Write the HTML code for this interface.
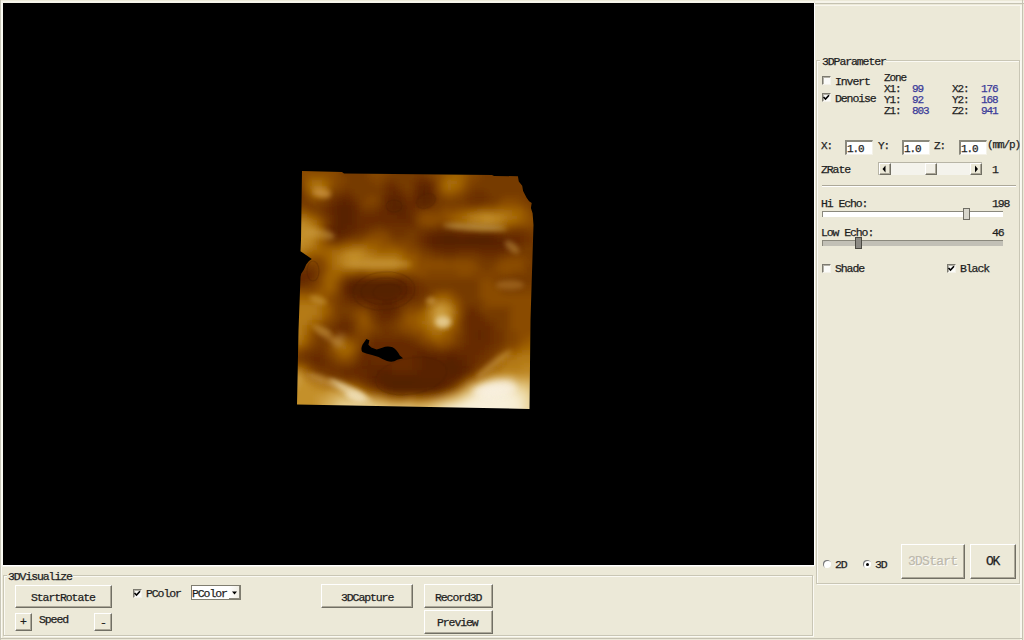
<!DOCTYPE html>
<html><head><meta charset="utf-8">
<style>
html,body{margin:0;padding:0;}
body{width:1024px;height:640px;overflow:hidden;background:#ECE9D8;position:relative;font-family:"Liberation Mono",monospace;color:#222;}
.a{position:absolute;}
.t{position:absolute;font-size:11.5px;line-height:12px;letter-spacing:-1.1px;white-space:pre;color:#1e1e1e;-webkit-text-stroke:0.25px #1e1e1e;}
.s{position:absolute;font-size:11px;line-height:11px;letter-spacing:-1.1px;white-space:pre;color:#1e1e1e;-webkit-text-stroke:0.25px #1e1e1e;}
.grp{position:absolute;border:1px solid #C9C6B5;box-shadow:1px 1px 0 #fbfaf4, inset 1px 1px 0 #fbfaf4;}
.btn{position:absolute;background:#ECE9D8;box-sizing:border-box;border-top:1px solid #fff;border-left:1px solid #fff;border-right:1px solid #716F64;border-bottom:1px solid #716F64;box-shadow:inset -1px -1px 0 #ACA899;}
.cb{position:absolute;width:9px;height:9px;box-sizing:border-box;background:#fbfbf8;border-top:1px solid #7c7a70;border-left:1px solid #7c7a70;border-right:1px solid #f4f2ea;border-bottom:1px solid #f4f2ea;box-shadow:inset 1px 1px 0 #b4b2a8;}
.edit{position:absolute;box-sizing:border-box;background:#fff;border-top:2px solid #8a887c;border-left:2px solid #8a887c;border-right:1px solid #f4f2e8;border-bottom:1px solid #f4f2e8;}
.num{color:#3a3a98;-webkit-text-stroke:0.25px #3a3a98;}
.ck{position:absolute;left:-1px;top:-1px;}
</style></head><body>
<!-- outer frame lines -->
<div class="a" style="left:0;top:0;width:1px;height:640px;background:#c9c7b8"></div>
<div class="a" style="left:1px;top:1px;width:2px;height:566px;background:#fbfaf3"></div>
<div class="a" style="left:1px;top:566px;width:1px;height:72px;background:#fbfaf3"></div>
<div class="a" style="left:1px;top:1px;width:813px;height:2px;background:#f6f4ea"></div>
<!-- black viewport -->
<div class="a" style="left:3px;top:3px;width:811px;height:562px;background:#000"></div>
<div class="a" style="left:814px;top:3px;width:1px;height:563px;background:#fff"></div>
<div class="a" style="left:3px;top:565px;width:812px;height:1px;background:#fff"></div>

<!-- ultrasound image -->
<svg class="a" style="left:0;top:0" width="1024" height="640">
  <defs><clipPath id="clip"><polygon points="302,171 342,172 344,173.5 492,175 494,176 517.9,176.2 518.8,181.4 522.2,185.7 523.1,190.9 526.6,197.8 529.1,201.2 531.7,202.9 530.9,208.1 532.6,213.3 533.5,225 530.5,320 529.5,409 297,404.5 298.5,330 300.5,277 301.2,273.7 304,269.5 306.2,264.6 309,261 311.8,259 300.5,251.2 301,240"/></clipPath><filter id="fg" x="0" y="0" width="1024" height="640" filterUnits="userSpaceOnUse"><feGaussianBlur stdDeviation="3"/></filter><filter id="fh" x="-50%" y="-50%" width="200%" height="200%"><feGaussianBlur stdDeviation="0.5"/></filter><filter id="fr" x="-50%" y="-50%" width="200%" height="200%"><feGaussianBlur stdDeviation="0.7"/></filter><filter id="f1_5" x="-100%" y="-100%" width="300%" height="300%"><feGaussianBlur stdDeviation="1.5"/></filter><filter id="f2" x="-100%" y="-100%" width="300%" height="300%"><feGaussianBlur stdDeviation="2"/></filter><filter id="f2_5" x="-100%" y="-100%" width="300%" height="300%"><feGaussianBlur stdDeviation="2.5"/></filter><filter id="f3" x="-100%" y="-100%" width="300%" height="300%"><feGaussianBlur stdDeviation="3"/></filter><filter id="f4" x="-100%" y="-100%" width="300%" height="300%"><feGaussianBlur stdDeviation="4"/></filter></defs>
  <g clip-path="url(#clip)">
    <g filter="url(#fg)"><rect x="267" y="140" width="70" height="5" fill="#8a4c00"/><rect x="337" y="140" width="5" height="5" fill="#804300"/><rect x="342" y="140" width="25" height="5" fill="#763a00"/><rect x="367" y="140" width="5" height="5" fill="#804300"/><rect x="372" y="140" width="10" height="5" fill="#8a4c00"/><rect x="382" y="140" width="10" height="5" fill="#804300"/><rect x="392" y="140" width="40" height="5" fill="#763a00"/><rect x="432" y="140" width="5" height="5" fill="#804300"/><rect x="437" y="140" width="5" height="5" fill="#8a4c00"/><rect x="442" y="140" width="5" height="5" fill="#955700"/><rect x="447" y="140" width="15" height="5" fill="#a06200"/><rect x="462" y="140" width="5" height="5" fill="#955700"/><rect x="467" y="140" width="5" height="5" fill="#8a4c00"/><rect x="472" y="140" width="10" height="5" fill="#804300"/><rect x="482" y="140" width="85" height="5" fill="#763a00"/><rect x="267" y="145" width="70" height="5" fill="#8a4c00"/><rect x="337" y="145" width="5" height="5" fill="#804300"/><rect x="342" y="145" width="25" height="5" fill="#763a00"/><rect x="367" y="145" width="5" height="5" fill="#804300"/><rect x="372" y="145" width="10" height="5" fill="#8a4c00"/><rect x="382" y="145" width="10" height="5" fill="#804300"/><rect x="392" y="145" width="40" height="5" fill="#763a00"/><rect x="432" y="145" width="5" height="5" fill="#804300"/><rect x="437" y="145" width="5" height="5" fill="#8a4c00"/><rect x="442" y="145" width="5" height="5" fill="#955700"/><rect x="447" y="145" width="15" height="5" fill="#a06200"/><rect x="462" y="145" width="5" height="5" fill="#955700"/><rect x="467" y="145" width="5" height="5" fill="#8a4c00"/><rect x="472" y="145" width="10" height="5" fill="#804300"/><rect x="482" y="145" width="85" height="5" fill="#763a00"/><rect x="267" y="150" width="70" height="5" fill="#8a4c00"/><rect x="337" y="150" width="5" height="5" fill="#804300"/><rect x="342" y="150" width="25" height="5" fill="#763a00"/><rect x="367" y="150" width="5" height="5" fill="#804300"/><rect x="372" y="150" width="10" height="5" fill="#8a4c00"/><rect x="382" y="150" width="10" height="5" fill="#804300"/><rect x="392" y="150" width="40" height="5" fill="#763a00"/><rect x="432" y="150" width="5" height="5" fill="#804300"/><rect x="437" y="150" width="5" height="5" fill="#8a4c00"/><rect x="442" y="150" width="5" height="5" fill="#955700"/><rect x="447" y="150" width="15" height="5" fill="#a06200"/><rect x="462" y="150" width="5" height="5" fill="#955700"/><rect x="467" y="150" width="5" height="5" fill="#8a4c00"/><rect x="472" y="150" width="10" height="5" fill="#804300"/><rect x="482" y="150" width="85" height="5" fill="#763a00"/><rect x="267" y="155" width="70" height="5" fill="#8a4c00"/><rect x="337" y="155" width="5" height="5" fill="#804300"/><rect x="342" y="155" width="25" height="5" fill="#763a00"/><rect x="367" y="155" width="5" height="5" fill="#804300"/><rect x="372" y="155" width="10" height="5" fill="#8a4c00"/><rect x="382" y="155" width="10" height="5" fill="#804300"/><rect x="392" y="155" width="40" height="5" fill="#763a00"/><rect x="432" y="155" width="5" height="5" fill="#804300"/><rect x="437" y="155" width="5" height="5" fill="#8a4c00"/><rect x="442" y="155" width="5" height="5" fill="#955700"/><rect x="447" y="155" width="15" height="5" fill="#a06200"/><rect x="462" y="155" width="5" height="5" fill="#955700"/><rect x="467" y="155" width="5" height="5" fill="#8a4c00"/><rect x="472" y="155" width="10" height="5" fill="#804300"/><rect x="482" y="155" width="85" height="5" fill="#763a00"/><rect x="267" y="160" width="70" height="5" fill="#8a4c00"/><rect x="337" y="160" width="5" height="5" fill="#804300"/><rect x="342" y="160" width="10" height="5" fill="#763a00"/><rect x="352" y="160" width="5" height="5" fill="#6e3300"/><rect x="357" y="160" width="10" height="5" fill="#763a00"/><rect x="367" y="160" width="5" height="5" fill="#804300"/><rect x="372" y="160" width="15" height="5" fill="#8a4c00"/><rect x="387" y="160" width="5" height="5" fill="#804300"/><rect x="392" y="160" width="35" height="5" fill="#763a00"/><rect x="427" y="160" width="10" height="5" fill="#804300"/><rect x="437" y="160" width="5" height="5" fill="#8a4c00"/><rect x="442" y="160" width="10" height="5" fill="#955700"/><rect x="452" y="160" width="10" height="5" fill="#a06200"/><rect x="462" y="160" width="5" height="5" fill="#955700"/><rect x="467" y="160" width="10" height="5" fill="#8a4c00"/><rect x="477" y="160" width="5" height="5" fill="#804300"/><rect x="482" y="160" width="85" height="5" fill="#763a00"/><rect x="267" y="165" width="45" height="5" fill="#8a4c00"/><rect x="312" y="165" width="10" height="5" fill="#804300"/><rect x="322" y="165" width="15" height="5" fill="#8a4c00"/><rect x="337" y="165" width="5" height="5" fill="#804300"/><rect x="342" y="165" width="10" height="5" fill="#763a00"/><rect x="352" y="165" width="5" height="5" fill="#6e3300"/><rect x="357" y="165" width="10" height="5" fill="#763a00"/><rect x="367" y="165" width="5" height="5" fill="#804300"/><rect x="372" y="165" width="15" height="5" fill="#8a4c00"/><rect x="387" y="165" width="5" height="5" fill="#804300"/><rect x="392" y="165" width="35" height="5" fill="#763a00"/><rect x="427" y="165" width="10" height="5" fill="#804300"/><rect x="437" y="165" width="5" height="5" fill="#8a4c00"/><rect x="442" y="165" width="10" height="5" fill="#955700"/><rect x="452" y="165" width="10" height="5" fill="#a06200"/><rect x="462" y="165" width="5" height="5" fill="#955700"/><rect x="467" y="165" width="10" height="5" fill="#8a4c00"/><rect x="477" y="165" width="5" height="5" fill="#804300"/><rect x="482" y="165" width="85" height="5" fill="#763a00"/><rect x="267" y="170" width="70" height="5" fill="#8a4c00"/><rect x="337" y="170" width="5" height="5" fill="#804300"/><rect x="342" y="170" width="25" height="5" fill="#763a00"/><rect x="367" y="170" width="5" height="5" fill="#804300"/><rect x="372" y="170" width="10" height="5" fill="#8a4c00"/><rect x="382" y="170" width="10" height="5" fill="#804300"/><rect x="392" y="170" width="35" height="5" fill="#763a00"/><rect x="427" y="170" width="10" height="5" fill="#804300"/><rect x="437" y="170" width="5" height="5" fill="#8a4c00"/><rect x="442" y="170" width="10" height="5" fill="#955700"/><rect x="452" y="170" width="10" height="5" fill="#a06200"/><rect x="462" y="170" width="5" height="5" fill="#955700"/><rect x="467" y="170" width="10" height="5" fill="#8a4c00"/><rect x="477" y="170" width="5" height="5" fill="#804300"/><rect x="482" y="170" width="85" height="5" fill="#763a00"/><rect x="267" y="175" width="25" height="5" fill="#8a4c00"/><rect x="292" y="175" width="5" height="5" fill="#804300"/><rect x="297" y="175" width="10" height="5" fill="#8a4c00"/><rect x="307" y="175" width="20" height="5" fill="#955700"/><rect x="327" y="175" width="10" height="5" fill="#8a4c00"/><rect x="337" y="175" width="10" height="5" fill="#804300"/><rect x="347" y="175" width="20" height="5" fill="#763a00"/><rect x="367" y="175" width="20" height="5" fill="#804300"/><rect x="387" y="175" width="30" height="5" fill="#763a00"/><rect x="417" y="175" width="10" height="5" fill="#6e3300"/><rect x="427" y="175" width="5" height="5" fill="#763a00"/><rect x="432" y="175" width="5" height="5" fill="#804300"/><rect x="437" y="175" width="5" height="5" fill="#8a4c00"/><rect x="442" y="175" width="5" height="5" fill="#955700"/><rect x="447" y="175" width="15" height="5" fill="#a06200"/><rect x="462" y="175" width="5" height="5" fill="#955700"/><rect x="467" y="175" width="5" height="5" fill="#8a4c00"/><rect x="472" y="175" width="10" height="5" fill="#804300"/><rect x="482" y="175" width="85" height="5" fill="#763a00"/><rect x="267" y="180" width="25" height="5" fill="#804300"/><rect x="292" y="180" width="5" height="5" fill="#763a00"/><rect x="297" y="180" width="5" height="5" fill="#804300"/><rect x="302" y="180" width="5" height="5" fill="#8a4c00"/><rect x="307" y="180" width="5" height="5" fill="#a06200"/><rect x="312" y="180" width="10" height="5" fill="#aa6e0a"/><rect x="322" y="180" width="5" height="5" fill="#a06200"/><rect x="327" y="180" width="5" height="5" fill="#955700"/><rect x="332" y="180" width="5" height="5" fill="#8a4c00"/><rect x="337" y="180" width="10" height="5" fill="#804300"/><rect x="347" y="180" width="25" height="5" fill="#763a00"/><rect x="372" y="180" width="10" height="5" fill="#804300"/><rect x="382" y="180" width="5" height="5" fill="#763a00"/><rect x="387" y="180" width="10" height="5" fill="#6e3300"/><rect x="397" y="180" width="15" height="5" fill="#763a00"/><rect x="412" y="180" width="5" height="5" fill="#6e3300"/><rect x="417" y="180" width="15" height="5" fill="#662c00"/><rect x="432" y="180" width="5" height="5" fill="#763a00"/><rect x="437" y="180" width="5" height="5" fill="#8a4c00"/><rect x="442" y="180" width="5" height="5" fill="#a06200"/><rect x="447" y="180" width="10" height="5" fill="#aa6e0a"/><rect x="457" y="180" width="5" height="5" fill="#a06200"/><rect x="462" y="180" width="5" height="5" fill="#955700"/><rect x="467" y="180" width="10" height="5" fill="#804300"/><rect x="477" y="180" width="90" height="5" fill="#763a00"/><rect x="267" y="185" width="35" height="5" fill="#763a00"/><rect x="302" y="185" width="5" height="5" fill="#8a4c00"/><rect x="307" y="185" width="5" height="5" fill="#a06200"/><rect x="312" y="185" width="10" height="5" fill="#b47a14"/><rect x="322" y="185" width="5" height="5" fill="#aa6e0a"/><rect x="327" y="185" width="5" height="5" fill="#955700"/><rect x="332" y="185" width="10" height="5" fill="#804300"/><rect x="342" y="185" width="40" height="5" fill="#763a00"/><rect x="382" y="185" width="5" height="5" fill="#6e3300"/><rect x="387" y="185" width="10" height="5" fill="#662c00"/><rect x="397" y="185" width="5" height="5" fill="#6e3300"/><rect x="402" y="185" width="10" height="5" fill="#763a00"/><rect x="412" y="185" width="5" height="5" fill="#6e3300"/><rect x="417" y="185" width="5" height="5" fill="#5f2800"/><rect x="422" y="185" width="5" height="5" fill="#582400"/><rect x="427" y="185" width="5" height="5" fill="#5f2800"/><rect x="432" y="185" width="5" height="5" fill="#6e3300"/><rect x="437" y="185" width="5" height="5" fill="#8a4c00"/><rect x="442" y="185" width="5" height="5" fill="#a06200"/><rect x="447" y="185" width="5" height="5" fill="#aa6e0a"/><rect x="452" y="185" width="10" height="5" fill="#a06200"/><rect x="462" y="185" width="5" height="5" fill="#8a4c00"/><rect x="467" y="185" width="5" height="5" fill="#804300"/><rect x="472" y="185" width="95" height="5" fill="#763a00"/><rect x="267" y="190" width="20" height="5" fill="#763a00"/><rect x="287" y="190" width="15" height="5" fill="#6e3300"/><rect x="302" y="190" width="5" height="5" fill="#804300"/><rect x="307" y="190" width="5" height="5" fill="#955700"/><rect x="312" y="190" width="10" height="5" fill="#aa6e0a"/><rect x="322" y="190" width="5" height="5" fill="#a06200"/><rect x="327" y="190" width="5" height="5" fill="#8a4c00"/><rect x="332" y="190" width="10" height="5" fill="#763a00"/><rect x="342" y="190" width="10" height="5" fill="#6e3300"/><rect x="352" y="190" width="30" height="5" fill="#763a00"/><rect x="382" y="190" width="5" height="5" fill="#6e3300"/><rect x="387" y="190" width="5" height="5" fill="#662c00"/><rect x="392" y="190" width="5" height="5" fill="#5f2800"/><rect x="397" y="190" width="5" height="5" fill="#662c00"/><rect x="402" y="190" width="5" height="5" fill="#6e3300"/><rect x="407" y="190" width="5" height="5" fill="#763a00"/><rect x="412" y="190" width="5" height="5" fill="#662c00"/><rect x="417" y="190" width="5" height="5" fill="#5f2800"/><rect x="422" y="190" width="5" height="5" fill="#582400"/><rect x="427" y="190" width="5" height="5" fill="#5f2800"/><rect x="432" y="190" width="5" height="5" fill="#6e3300"/><rect x="437" y="190" width="5" height="5" fill="#804300"/><rect x="442" y="190" width="15" height="5" fill="#955700"/><rect x="457" y="190" width="5" height="5" fill="#8a4c00"/><rect x="462" y="190" width="5" height="5" fill="#804300"/><rect x="467" y="190" width="5" height="5" fill="#763a00"/><rect x="472" y="190" width="15" height="5" fill="#6e3300"/><rect x="487" y="190" width="80" height="5" fill="#763a00"/><rect x="267" y="195" width="35" height="5" fill="#6e3300"/><rect x="302" y="195" width="5" height="5" fill="#763a00"/><rect x="307" y="195" width="5" height="5" fill="#8a4c00"/><rect x="312" y="195" width="10" height="5" fill="#955700"/><rect x="322" y="195" width="5" height="5" fill="#8a4c00"/><rect x="327" y="195" width="5" height="5" fill="#763a00"/><rect x="332" y="195" width="5" height="5" fill="#6e3300"/><rect x="337" y="195" width="15" height="5" fill="#662c00"/><rect x="352" y="195" width="5" height="5" fill="#6e3300"/><rect x="357" y="195" width="10" height="5" fill="#763a00"/><rect x="367" y="195" width="10" height="5" fill="#804300"/><rect x="377" y="195" width="5" height="5" fill="#763a00"/><rect x="382" y="195" width="5" height="5" fill="#662c00"/><rect x="387" y="195" width="15" height="5" fill="#5f2800"/><rect x="402" y="195" width="5" height="5" fill="#662c00"/><rect x="407" y="195" width="5" height="5" fill="#6e3300"/><rect x="412" y="195" width="5" height="5" fill="#662c00"/><rect x="417" y="195" width="5" height="5" fill="#5f2800"/><rect x="422" y="195" width="5" height="5" fill="#582400"/><rect x="427" y="195" width="5" height="5" fill="#5f2800"/><rect x="432" y="195" width="5" height="5" fill="#6e3300"/><rect x="437" y="195" width="5" height="5" fill="#763a00"/><rect x="442" y="195" width="5" height="5" fill="#804300"/><rect x="447" y="195" width="5" height="5" fill="#8a4c00"/><rect x="452" y="195" width="10" height="5" fill="#804300"/><rect x="462" y="195" width="5" height="5" fill="#763a00"/><rect x="467" y="195" width="10" height="5" fill="#6e3300"/><rect x="477" y="195" width="5" height="5" fill="#662c00"/><rect x="482" y="195" width="10" height="5" fill="#6e3300"/><rect x="492" y="195" width="10" height="5" fill="#763a00"/><rect x="502" y="195" width="20" height="5" fill="#804300"/><rect x="522" y="195" width="45" height="5" fill="#763a00"/><rect x="267" y="200" width="25" height="5" fill="#763a00"/><rect x="292" y="200" width="5" height="5" fill="#6e3300"/><rect x="297" y="200" width="15" height="5" fill="#763a00"/><rect x="312" y="200" width="5" height="5" fill="#804300"/><rect x="317" y="200" width="10" height="5" fill="#763a00"/><rect x="327" y="200" width="5" height="5" fill="#6e3300"/><rect x="332" y="200" width="5" height="5" fill="#662c00"/><rect x="337" y="200" width="5" height="5" fill="#5f2800"/><rect x="342" y="200" width="5" height="5" fill="#582400"/><rect x="347" y="200" width="5" height="5" fill="#5f2800"/><rect x="352" y="200" width="5" height="5" fill="#662c00"/><rect x="357" y="200" width="5" height="5" fill="#6e3300"/><rect x="362" y="200" width="15" height="5" fill="#804300"/><rect x="377" y="200" width="5" height="5" fill="#763a00"/><rect x="382" y="200" width="5" height="5" fill="#662c00"/><rect x="387" y="200" width="5" height="5" fill="#5f2800"/><rect x="392" y="200" width="5" height="5" fill="#582400"/><rect x="397" y="200" width="5" height="5" fill="#5f2800"/><rect x="402" y="200" width="20" height="5" fill="#662c00"/><rect x="422" y="200" width="5" height="5" fill="#5f2800"/><rect x="427" y="200" width="5" height="5" fill="#662c00"/><rect x="432" y="200" width="5" height="5" fill="#6e3300"/><rect x="437" y="200" width="30" height="5" fill="#763a00"/><rect x="467" y="200" width="20" height="5" fill="#6e3300"/><rect x="487" y="200" width="10" height="5" fill="#763a00"/><rect x="497" y="200" width="5" height="5" fill="#804300"/><rect x="502" y="200" width="15" height="5" fill="#8a4c00"/><rect x="517" y="200" width="10" height="5" fill="#804300"/><rect x="527" y="200" width="40" height="5" fill="#763a00"/><rect x="267" y="205" width="40" height="5" fill="#804300"/><rect x="307" y="205" width="15" height="5" fill="#763a00"/><rect x="322" y="205" width="5" height="5" fill="#6e3300"/><rect x="327" y="205" width="5" height="5" fill="#662c00"/><rect x="332" y="205" width="5" height="5" fill="#5f2800"/><rect x="337" y="205" width="15" height="5" fill="#582400"/><rect x="352" y="205" width="5" height="5" fill="#5f2800"/><rect x="357" y="205" width="5" height="5" fill="#6e3300"/><rect x="362" y="205" width="15" height="5" fill="#763a00"/><rect x="377" y="205" width="5" height="5" fill="#6e3300"/><rect x="382" y="205" width="5" height="5" fill="#662c00"/><rect x="387" y="205" width="5" height="5" fill="#5f2800"/><rect x="392" y="205" width="10" height="5" fill="#582400"/><rect x="402" y="205" width="5" height="5" fill="#5f2800"/><rect x="407" y="205" width="10" height="5" fill="#662c00"/><rect x="417" y="205" width="15" height="5" fill="#6e3300"/><rect x="432" y="205" width="10" height="5" fill="#763a00"/><rect x="442" y="205" width="40" height="5" fill="#804300"/><rect x="482" y="205" width="15" height="5" fill="#8a4c00"/><rect x="497" y="205" width="25" height="5" fill="#955700"/><rect x="522" y="205" width="5" height="5" fill="#8a4c00"/><rect x="527" y="205" width="5" height="5" fill="#804300"/><rect x="532" y="205" width="35" height="5" fill="#763a00"/><rect x="267" y="210" width="40" height="5" fill="#955700"/><rect x="307" y="210" width="5" height="5" fill="#8a4c00"/><rect x="312" y="210" width="5" height="5" fill="#804300"/><rect x="317" y="210" width="5" height="5" fill="#763a00"/><rect x="322" y="210" width="5" height="5" fill="#6e3300"/><rect x="327" y="210" width="5" height="5" fill="#662c00"/><rect x="332" y="210" width="5" height="5" fill="#5f2800"/><rect x="337" y="210" width="15" height="5" fill="#582400"/><rect x="352" y="210" width="5" height="5" fill="#5f2800"/><rect x="357" y="210" width="5" height="5" fill="#662c00"/><rect x="362" y="210" width="15" height="5" fill="#6e3300"/><rect x="377" y="210" width="10" height="5" fill="#662c00"/><rect x="387" y="210" width="20" height="5" fill="#5f2800"/><rect x="407" y="210" width="5" height="5" fill="#662c00"/><rect x="412" y="210" width="5" height="5" fill="#6e3300"/><rect x="417" y="210" width="5" height="5" fill="#763a00"/><rect x="422" y="210" width="20" height="5" fill="#804300"/><rect x="442" y="210" width="15" height="5" fill="#8a4c00"/><rect x="457" y="210" width="10" height="5" fill="#955700"/><rect x="467" y="210" width="10" height="5" fill="#a06200"/><rect x="477" y="210" width="35" height="5" fill="#aa6e0a"/><rect x="512" y="210" width="10" height="5" fill="#a06200"/><rect x="522" y="210" width="5" height="5" fill="#955700"/><rect x="527" y="210" width="5" height="5" fill="#8a4c00"/><rect x="532" y="210" width="35" height="5" fill="#804300"/><rect x="267" y="215" width="40" height="5" fill="#aa6e0a"/><rect x="307" y="215" width="5" height="5" fill="#a06200"/><rect x="312" y="215" width="5" height="5" fill="#955700"/><rect x="317" y="215" width="5" height="5" fill="#8a4c00"/><rect x="322" y="215" width="5" height="5" fill="#763a00"/><rect x="327" y="215" width="5" height="5" fill="#6e3300"/><rect x="332" y="215" width="5" height="5" fill="#5f2800"/><rect x="337" y="215" width="15" height="5" fill="#582400"/><rect x="352" y="215" width="5" height="5" fill="#5f2800"/><rect x="357" y="215" width="40" height="5" fill="#662c00"/><rect x="397" y="215" width="10" height="5" fill="#5f2800"/><rect x="407" y="215" width="5" height="5" fill="#662c00"/><rect x="412" y="215" width="5" height="5" fill="#6e3300"/><rect x="417" y="215" width="5" height="5" fill="#804300"/><rect x="422" y="215" width="25" height="5" fill="#8a4c00"/><rect x="447" y="215" width="5" height="5" fill="#955700"/><rect x="452" y="215" width="10" height="5" fill="#a06200"/><rect x="462" y="215" width="5" height="5" fill="#aa6e0a"/><rect x="467" y="215" width="5" height="5" fill="#b47a14"/><rect x="472" y="215" width="10" height="5" fill="#bc8520"/><rect x="482" y="215" width="10" height="5" fill="#c4902c"/><rect x="492" y="215" width="10" height="5" fill="#bc8520"/><rect x="502" y="215" width="5" height="5" fill="#b47a14"/><rect x="507" y="215" width="10" height="5" fill="#aa6e0a"/><rect x="517" y="215" width="5" height="5" fill="#a06200"/><rect x="522" y="215" width="5" height="5" fill="#955700"/><rect x="527" y="215" width="40" height="5" fill="#8a4c00"/><rect x="267" y="220" width="40" height="5" fill="#bc8520"/><rect x="307" y="220" width="5" height="5" fill="#b47a14"/><rect x="312" y="220" width="5" height="5" fill="#aa6e0a"/><rect x="317" y="220" width="5" height="5" fill="#955700"/><rect x="322" y="220" width="5" height="5" fill="#804300"/><rect x="327" y="220" width="5" height="5" fill="#6e3300"/><rect x="332" y="220" width="5" height="5" fill="#5f2800"/><rect x="337" y="220" width="15" height="5" fill="#582400"/><rect x="352" y="220" width="5" height="5" fill="#5f2800"/><rect x="357" y="220" width="55" height="5" fill="#662c00"/><rect x="412" y="220" width="5" height="5" fill="#6e3300"/><rect x="417" y="220" width="5" height="5" fill="#804300"/><rect x="422" y="220" width="15" height="5" fill="#8a4c00"/><rect x="437" y="220" width="5" height="5" fill="#804300"/><rect x="442" y="220" width="10" height="5" fill="#8a4c00"/><rect x="452" y="220" width="5" height="5" fill="#955700"/><rect x="457" y="220" width="10" height="5" fill="#a06200"/><rect x="467" y="220" width="5" height="5" fill="#aa6e0a"/><rect x="472" y="220" width="10" height="5" fill="#b47a14"/><rect x="482" y="220" width="15" height="5" fill="#bc8520"/><rect x="497" y="220" width="5" height="5" fill="#b47a14"/><rect x="502" y="220" width="5" height="5" fill="#aa6e0a"/><rect x="507" y="220" width="10" height="5" fill="#a06200"/><rect x="517" y="220" width="10" height="5" fill="#955700"/><rect x="527" y="220" width="40" height="5" fill="#8a4c00"/><rect x="267" y="225" width="40" height="5" fill="#c4902c"/><rect x="307" y="225" width="5" height="5" fill="#bc8520"/><rect x="312" y="225" width="5" height="5" fill="#b47a14"/><rect x="317" y="225" width="5" height="5" fill="#a06200"/><rect x="322" y="225" width="5" height="5" fill="#804300"/><rect x="327" y="225" width="5" height="5" fill="#662c00"/><rect x="332" y="225" width="5" height="5" fill="#5f2800"/><rect x="337" y="225" width="10" height="5" fill="#582400"/><rect x="347" y="225" width="10" height="5" fill="#5f2800"/><rect x="357" y="225" width="10" height="5" fill="#662c00"/><rect x="367" y="225" width="10" height="5" fill="#6e3300"/><rect x="377" y="225" width="5" height="5" fill="#763a00"/><rect x="382" y="225" width="35" height="5" fill="#6e3300"/><rect x="417" y="225" width="20" height="5" fill="#763a00"/><rect x="437" y="225" width="5" height="5" fill="#6e3300"/><rect x="442" y="225" width="10" height="5" fill="#763a00"/><rect x="452" y="225" width="15" height="5" fill="#804300"/><rect x="467" y="225" width="10" height="5" fill="#8a4c00"/><rect x="477" y="225" width="30" height="5" fill="#955700"/><rect x="507" y="225" width="5" height="5" fill="#8a4c00"/><rect x="512" y="225" width="55" height="5" fill="#804300"/><rect x="267" y="230" width="45" height="5" fill="#c4902c"/><rect x="312" y="230" width="5" height="5" fill="#bc8520"/><rect x="317" y="230" width="5" height="5" fill="#a06200"/><rect x="322" y="230" width="5" height="5" fill="#804300"/><rect x="327" y="230" width="5" height="5" fill="#662c00"/><rect x="332" y="230" width="5" height="5" fill="#5f2800"/><rect x="337" y="230" width="5" height="5" fill="#582400"/><rect x="342" y="230" width="10" height="5" fill="#5f2800"/><rect x="352" y="230" width="5" height="5" fill="#662c00"/><rect x="357" y="230" width="10" height="5" fill="#6e3300"/><rect x="367" y="230" width="5" height="5" fill="#763a00"/><rect x="372" y="230" width="15" height="5" fill="#804300"/><rect x="387" y="230" width="5" height="5" fill="#763a00"/><rect x="392" y="230" width="15" height="5" fill="#6e3300"/><rect x="407" y="230" width="10" height="5" fill="#763a00"/><rect x="417" y="230" width="10" height="5" fill="#6e3300"/><rect x="427" y="230" width="10" height="5" fill="#662c00"/><rect x="437" y="230" width="20" height="5" fill="#5f2800"/><rect x="457" y="230" width="35" height="5" fill="#662c00"/><rect x="492" y="230" width="10" height="5" fill="#6e3300"/><rect x="502" y="230" width="5" height="5" fill="#763a00"/><rect x="507" y="230" width="20" height="5" fill="#6e3300"/><rect x="527" y="230" width="10" height="5" fill="#763a00"/><rect x="537" y="230" width="10" height="5" fill="#804300"/><rect x="547" y="230" width="20" height="5" fill="#763a00"/><rect x="267" y="235" width="45" height="5" fill="#c4902c"/><rect x="312" y="235" width="5" height="5" fill="#b47a14"/><rect x="317" y="235" width="5" height="5" fill="#a06200"/><rect x="322" y="235" width="5" height="5" fill="#8a4c00"/><rect x="327" y="235" width="5" height="5" fill="#6e3300"/><rect x="332" y="235" width="15" height="5" fill="#662c00"/><rect x="347" y="235" width="5" height="5" fill="#6e3300"/><rect x="352" y="235" width="10" height="5" fill="#763a00"/><rect x="362" y="235" width="5" height="5" fill="#804300"/><rect x="367" y="235" width="20" height="5" fill="#8a4c00"/><rect x="387" y="235" width="5" height="5" fill="#804300"/><rect x="392" y="235" width="25" height="5" fill="#763a00"/><rect x="417" y="235" width="5" height="5" fill="#6e3300"/><rect x="422" y="235" width="5" height="5" fill="#662c00"/><rect x="427" y="235" width="5" height="5" fill="#5f2800"/><rect x="432" y="235" width="10" height="5" fill="#582400"/><rect x="442" y="235" width="15" height="5" fill="#552200"/><rect x="457" y="235" width="10" height="5" fill="#582400"/><rect x="467" y="235" width="20" height="5" fill="#552200"/><rect x="487" y="235" width="10" height="5" fill="#582400"/><rect x="497" y="235" width="10" height="5" fill="#5f2800"/><rect x="507" y="235" width="15" height="5" fill="#662c00"/><rect x="522" y="235" width="10" height="5" fill="#6e3300"/><rect x="532" y="235" width="35" height="5" fill="#763a00"/><rect x="267" y="240" width="35" height="5" fill="#c4902c"/><rect x="302" y="240" width="10" height="5" fill="#bc8520"/><rect x="312" y="240" width="5" height="5" fill="#b47a14"/><rect x="317" y="240" width="5" height="5" fill="#a06200"/><rect x="322" y="240" width="5" height="5" fill="#955700"/><rect x="327" y="240" width="5" height="5" fill="#804300"/><rect x="332" y="240" width="10" height="5" fill="#763a00"/><rect x="342" y="240" width="5" height="5" fill="#804300"/><rect x="347" y="240" width="15" height="5" fill="#8a4c00"/><rect x="362" y="240" width="20" height="5" fill="#955700"/><rect x="382" y="240" width="10" height="5" fill="#8a4c00"/><rect x="392" y="240" width="20" height="5" fill="#804300"/><rect x="412" y="240" width="5" height="5" fill="#763a00"/><rect x="417" y="240" width="5" height="5" fill="#6e3300"/><rect x="422" y="240" width="5" height="5" fill="#662c00"/><rect x="427" y="240" width="5" height="5" fill="#5f2800"/><rect x="432" y="240" width="10" height="5" fill="#582400"/><rect x="442" y="240" width="50" height="5" fill="#552200"/><rect x="492" y="240" width="10" height="5" fill="#582400"/><rect x="502" y="240" width="10" height="5" fill="#5f2800"/><rect x="512" y="240" width="10" height="5" fill="#662c00"/><rect x="522" y="240" width="10" height="5" fill="#6e3300"/><rect x="532" y="240" width="35" height="5" fill="#763a00"/><rect x="267" y="245" width="40" height="5" fill="#bc8520"/><rect x="307" y="245" width="5" height="5" fill="#b47a14"/><rect x="312" y="245" width="5" height="5" fill="#aa6e0a"/><rect x="317" y="245" width="5" height="5" fill="#a06200"/><rect x="322" y="245" width="20" height="5" fill="#955700"/><rect x="342" y="245" width="10" height="5" fill="#a06200"/><rect x="352" y="245" width="15" height="5" fill="#aa6e0a"/><rect x="367" y="245" width="10" height="5" fill="#a06200"/><rect x="377" y="245" width="20" height="5" fill="#955700"/><rect x="397" y="245" width="10" height="5" fill="#8a4c00"/><rect x="407" y="245" width="10" height="5" fill="#804300"/><rect x="417" y="245" width="5" height="5" fill="#763a00"/><rect x="422" y="245" width="5" height="5" fill="#6e3300"/><rect x="427" y="245" width="5" height="5" fill="#662c00"/><rect x="432" y="245" width="75" height="5" fill="#5f2800"/><rect x="507" y="245" width="5" height="5" fill="#662c00"/><rect x="512" y="245" width="10" height="5" fill="#6e3300"/><rect x="522" y="245" width="45" height="5" fill="#763a00"/><rect x="267" y="250" width="35" height="5" fill="#b47a14"/><rect x="302" y="250" width="5" height="5" fill="#aa6e0a"/><rect x="307" y="250" width="25" height="5" fill="#a06200"/><rect x="332" y="250" width="10" height="5" fill="#aa6e0a"/><rect x="342" y="250" width="5" height="5" fill="#b47a14"/><rect x="347" y="250" width="15" height="5" fill="#bc8520"/><rect x="362" y="250" width="5" height="5" fill="#b47a14"/><rect x="367" y="250" width="10" height="5" fill="#aa6e0a"/><rect x="377" y="250" width="25" height="5" fill="#a06200"/><rect x="402" y="250" width="5" height="5" fill="#955700"/><rect x="407" y="250" width="10" height="5" fill="#8a4c00"/><rect x="417" y="250" width="5" height="5" fill="#804300"/><rect x="422" y="250" width="10" height="5" fill="#763a00"/><rect x="432" y="250" width="10" height="5" fill="#6e3300"/><rect x="442" y="250" width="15" height="5" fill="#662c00"/><rect x="457" y="250" width="20" height="5" fill="#6e3300"/><rect x="477" y="250" width="25" height="5" fill="#662c00"/><rect x="502" y="250" width="10" height="5" fill="#6e3300"/><rect x="512" y="250" width="55" height="5" fill="#763a00"/><rect x="267" y="255" width="35" height="5" fill="#a06200"/><rect x="302" y="255" width="10" height="5" fill="#955700"/><rect x="312" y="255" width="10" height="5" fill="#8a4c00"/><rect x="322" y="255" width="5" height="5" fill="#955700"/><rect x="327" y="255" width="5" height="5" fill="#a06200"/><rect x="332" y="255" width="5" height="5" fill="#aa6e0a"/><rect x="337" y="255" width="5" height="5" fill="#b47a14"/><rect x="342" y="255" width="5" height="5" fill="#bc8520"/><rect x="347" y="255" width="15" height="5" fill="#c4902c"/><rect x="362" y="255" width="10" height="5" fill="#bc8520"/><rect x="372" y="255" width="25" height="5" fill="#b47a14"/><rect x="397" y="255" width="5" height="5" fill="#aa6e0a"/><rect x="402" y="255" width="5" height="5" fill="#a06200"/><rect x="407" y="255" width="10" height="5" fill="#955700"/><rect x="417" y="255" width="5" height="5" fill="#8a4c00"/><rect x="422" y="255" width="10" height="5" fill="#804300"/><rect x="432" y="255" width="50" height="5" fill="#763a00"/><rect x="482" y="255" width="15" height="5" fill="#6e3300"/><rect x="497" y="255" width="10" height="5" fill="#763a00"/><rect x="507" y="255" width="20" height="5" fill="#804300"/><rect x="527" y="255" width="40" height="5" fill="#763a00"/><rect x="267" y="260" width="35" height="5" fill="#8a4c00"/><rect x="302" y="260" width="20" height="5" fill="#804300"/><rect x="322" y="260" width="5" height="5" fill="#8a4c00"/><rect x="327" y="260" width="5" height="5" fill="#a06200"/><rect x="332" y="260" width="5" height="5" fill="#aa6e0a"/><rect x="337" y="260" width="5" height="5" fill="#b47a14"/><rect x="342" y="260" width="10" height="5" fill="#bc8520"/><rect x="352" y="260" width="5" height="5" fill="#c4902c"/><rect x="357" y="260" width="40" height="5" fill="#bc8520"/><rect x="397" y="260" width="5" height="5" fill="#b47a14"/><rect x="402" y="260" width="5" height="5" fill="#aa6e0a"/><rect x="407" y="260" width="5" height="5" fill="#a06200"/><rect x="412" y="260" width="5" height="5" fill="#955700"/><rect x="417" y="260" width="30" height="5" fill="#8a4c00"/><rect x="447" y="260" width="5" height="5" fill="#804300"/><rect x="452" y="260" width="20" height="5" fill="#8a4c00"/><rect x="472" y="260" width="5" height="5" fill="#804300"/><rect x="477" y="260" width="20" height="5" fill="#763a00"/><rect x="497" y="260" width="5" height="5" fill="#804300"/><rect x="502" y="260" width="20" height="5" fill="#8a4c00"/><rect x="522" y="260" width="10" height="5" fill="#804300"/><rect x="532" y="260" width="35" height="5" fill="#763a00"/><rect x="267" y="265" width="40" height="5" fill="#763a00"/><rect x="307" y="265" width="5" height="5" fill="#6e3300"/><rect x="312" y="265" width="5" height="5" fill="#763a00"/><rect x="317" y="265" width="5" height="5" fill="#804300"/><rect x="322" y="265" width="5" height="5" fill="#8a4c00"/><rect x="327" y="265" width="5" height="5" fill="#955700"/><rect x="332" y="265" width="10" height="5" fill="#aa6e0a"/><rect x="342" y="265" width="55" height="5" fill="#b47a14"/><rect x="397" y="265" width="10" height="5" fill="#aa6e0a"/><rect x="407" y="265" width="5" height="5" fill="#a06200"/><rect x="412" y="265" width="5" height="5" fill="#955700"/><rect x="417" y="265" width="60" height="5" fill="#8a4c00"/><rect x="477" y="265" width="5" height="5" fill="#804300"/><rect x="482" y="265" width="10" height="5" fill="#763a00"/><rect x="492" y="265" width="5" height="5" fill="#804300"/><rect x="497" y="265" width="25" height="5" fill="#8a4c00"/><rect x="522" y="265" width="5" height="5" fill="#804300"/><rect x="527" y="265" width="40" height="5" fill="#763a00"/><rect x="267" y="270" width="45" height="5" fill="#662c00"/><rect x="312" y="270" width="5" height="5" fill="#6e3300"/><rect x="317" y="270" width="5" height="5" fill="#763a00"/><rect x="322" y="270" width="5" height="5" fill="#8a4c00"/><rect x="327" y="270" width="15" height="5" fill="#a06200"/><rect x="342" y="270" width="15" height="5" fill="#955700"/><rect x="357" y="270" width="10" height="5" fill="#8a4c00"/><rect x="367" y="270" width="30" height="5" fill="#955700"/><rect x="397" y="270" width="30" height="5" fill="#8a4c00"/><rect x="427" y="270" width="30" height="5" fill="#804300"/><rect x="457" y="270" width="15" height="5" fill="#8a4c00"/><rect x="472" y="270" width="30" height="5" fill="#804300"/><rect x="502" y="270" width="10" height="5" fill="#8a4c00"/><rect x="512" y="270" width="15" height="5" fill="#804300"/><rect x="527" y="270" width="40" height="5" fill="#763a00"/><rect x="267" y="275" width="45" height="5" fill="#662c00"/><rect x="312" y="275" width="5" height="5" fill="#6e3300"/><rect x="317" y="275" width="5" height="5" fill="#804300"/><rect x="322" y="275" width="5" height="5" fill="#955700"/><rect x="327" y="275" width="10" height="5" fill="#a06200"/><rect x="337" y="275" width="5" height="5" fill="#955700"/><rect x="342" y="275" width="5" height="5" fill="#804300"/><rect x="347" y="275" width="5" height="5" fill="#763a00"/><rect x="352" y="275" width="55" height="5" fill="#6e3300"/><rect x="407" y="275" width="10" height="5" fill="#763a00"/><rect x="417" y="275" width="85" height="5" fill="#804300"/><rect x="502" y="275" width="65" height="5" fill="#763a00"/><rect x="267" y="280" width="40" height="5" fill="#662c00"/><rect x="307" y="280" width="5" height="5" fill="#6e3300"/><rect x="312" y="280" width="5" height="5" fill="#763a00"/><rect x="317" y="280" width="5" height="5" fill="#804300"/><rect x="322" y="280" width="5" height="5" fill="#955700"/><rect x="327" y="280" width="5" height="5" fill="#a06200"/><rect x="332" y="280" width="5" height="5" fill="#955700"/><rect x="337" y="280" width="5" height="5" fill="#804300"/><rect x="342" y="280" width="5" height="5" fill="#6e3300"/><rect x="347" y="280" width="5" height="5" fill="#5f2800"/><rect x="352" y="280" width="50" height="5" fill="#582400"/><rect x="402" y="280" width="5" height="5" fill="#5f2800"/><rect x="407" y="280" width="5" height="5" fill="#662c00"/><rect x="412" y="280" width="10" height="5" fill="#6e3300"/><rect x="422" y="280" width="55" height="5" fill="#763a00"/><rect x="477" y="280" width="5" height="5" fill="#804300"/><rect x="482" y="280" width="10" height="5" fill="#8a4c00"/><rect x="492" y="280" width="5" height="5" fill="#804300"/><rect x="497" y="280" width="70" height="5" fill="#763a00"/><rect x="267" y="285" width="45" height="5" fill="#763a00"/><rect x="312" y="285" width="5" height="5" fill="#804300"/><rect x="317" y="285" width="5" height="5" fill="#8a4c00"/><rect x="322" y="285" width="5" height="5" fill="#955700"/><rect x="327" y="285" width="5" height="5" fill="#a06200"/><rect x="332" y="285" width="5" height="5" fill="#955700"/><rect x="337" y="285" width="5" height="5" fill="#804300"/><rect x="342" y="285" width="5" height="5" fill="#662c00"/><rect x="347" y="285" width="5" height="5" fill="#582400"/><rect x="352" y="285" width="50" height="5" fill="#552200"/><rect x="402" y="285" width="5" height="5" fill="#582400"/><rect x="407" y="285" width="5" height="5" fill="#5f2800"/><rect x="412" y="285" width="5" height="5" fill="#662c00"/><rect x="417" y="285" width="10" height="5" fill="#6e3300"/><rect x="427" y="285" width="50" height="5" fill="#763a00"/><rect x="477" y="285" width="5" height="5" fill="#804300"/><rect x="482" y="285" width="15" height="5" fill="#8a4c00"/><rect x="497" y="285" width="5" height="5" fill="#804300"/><rect x="502" y="285" width="20" height="5" fill="#763a00"/><rect x="522" y="285" width="45" height="5" fill="#804300"/><rect x="267" y="290" width="50" height="5" fill="#8a4c00"/><rect x="317" y="290" width="15" height="5" fill="#955700"/><rect x="332" y="290" width="5" height="5" fill="#8a4c00"/><rect x="337" y="290" width="5" height="5" fill="#763a00"/><rect x="342" y="290" width="5" height="5" fill="#662c00"/><rect x="347" y="290" width="5" height="5" fill="#582400"/><rect x="352" y="290" width="45" height="5" fill="#552200"/><rect x="397" y="290" width="10" height="5" fill="#582400"/><rect x="407" y="290" width="5" height="5" fill="#5f2800"/><rect x="412" y="290" width="5" height="5" fill="#662c00"/><rect x="417" y="290" width="10" height="5" fill="#6e3300"/><rect x="427" y="290" width="5" height="5" fill="#763a00"/><rect x="432" y="290" width="5" height="5" fill="#804300"/><rect x="437" y="290" width="15" height="5" fill="#8a4c00"/><rect x="452" y="290" width="5" height="5" fill="#804300"/><rect x="457" y="290" width="20" height="5" fill="#763a00"/><rect x="477" y="290" width="5" height="5" fill="#804300"/><rect x="482" y="290" width="20" height="5" fill="#8a4c00"/><rect x="502" y="290" width="65" height="5" fill="#804300"/><rect x="267" y="295" width="55" height="5" fill="#a06200"/><rect x="322" y="295" width="5" height="5" fill="#955700"/><rect x="327" y="295" width="5" height="5" fill="#8a4c00"/><rect x="332" y="295" width="5" height="5" fill="#804300"/><rect x="337" y="295" width="5" height="5" fill="#763a00"/><rect x="342" y="295" width="5" height="5" fill="#6e3300"/><rect x="347" y="295" width="10" height="5" fill="#5f2800"/><rect x="357" y="295" width="40" height="5" fill="#582400"/><rect x="397" y="295" width="10" height="5" fill="#5f2800"/><rect x="407" y="295" width="10" height="5" fill="#662c00"/><rect x="417" y="295" width="5" height="5" fill="#6e3300"/><rect x="422" y="295" width="5" height="5" fill="#763a00"/><rect x="427" y="295" width="5" height="5" fill="#804300"/><rect x="432" y="295" width="5" height="5" fill="#955700"/><rect x="437" y="295" width="10" height="5" fill="#a06200"/><rect x="447" y="295" width="5" height="5" fill="#955700"/><rect x="452" y="295" width="5" height="5" fill="#8a4c00"/><rect x="457" y="295" width="5" height="5" fill="#804300"/><rect x="462" y="295" width="15" height="5" fill="#763a00"/><rect x="477" y="295" width="5" height="5" fill="#804300"/><rect x="482" y="295" width="85" height="5" fill="#8a4c00"/><rect x="267" y="300" width="55" height="5" fill="#aa6e0a"/><rect x="322" y="300" width="5" height="5" fill="#a06200"/><rect x="327" y="300" width="5" height="5" fill="#8a4c00"/><rect x="332" y="300" width="5" height="5" fill="#804300"/><rect x="337" y="300" width="5" height="5" fill="#763a00"/><rect x="342" y="300" width="10" height="5" fill="#6e3300"/><rect x="352" y="300" width="15" height="5" fill="#662c00"/><rect x="367" y="300" width="15" height="5" fill="#5f2800"/><rect x="382" y="300" width="10" height="5" fill="#582400"/><rect x="392" y="300" width="5" height="5" fill="#5f2800"/><rect x="397" y="300" width="10" height="5" fill="#662c00"/><rect x="407" y="300" width="5" height="5" fill="#6e3300"/><rect x="412" y="300" width="10" height="5" fill="#763a00"/><rect x="422" y="300" width="5" height="5" fill="#804300"/><rect x="427" y="300" width="5" height="5" fill="#955700"/><rect x="432" y="300" width="5" height="5" fill="#aa6e0a"/><rect x="437" y="300" width="10" height="5" fill="#b47a14"/><rect x="447" y="300" width="5" height="5" fill="#aa6e0a"/><rect x="452" y="300" width="5" height="5" fill="#955700"/><rect x="457" y="300" width="5" height="5" fill="#8a4c00"/><rect x="462" y="300" width="20" height="5" fill="#763a00"/><rect x="482" y="300" width="5" height="5" fill="#804300"/><rect x="487" y="300" width="80" height="5" fill="#8a4c00"/><rect x="267" y="305" width="50" height="5" fill="#b47a14"/><rect x="317" y="305" width="5" height="5" fill="#aa6e0a"/><rect x="322" y="305" width="5" height="5" fill="#a06200"/><rect x="327" y="305" width="5" height="5" fill="#955700"/><rect x="332" y="305" width="5" height="5" fill="#804300"/><rect x="337" y="305" width="30" height="5" fill="#763a00"/><rect x="367" y="305" width="5" height="5" fill="#6e3300"/><rect x="372" y="305" width="5" height="5" fill="#662c00"/><rect x="377" y="305" width="20" height="5" fill="#5f2800"/><rect x="397" y="305" width="5" height="5" fill="#6e3300"/><rect x="402" y="305" width="5" height="5" fill="#763a00"/><rect x="407" y="305" width="15" height="5" fill="#804300"/><rect x="422" y="305" width="5" height="5" fill="#8a4c00"/><rect x="427" y="305" width="5" height="5" fill="#aa6e0a"/><rect x="432" y="305" width="5" height="5" fill="#bc8520"/><rect x="437" y="305" width="5" height="5" fill="#ca9a3a"/><rect x="442" y="305" width="5" height="5" fill="#c4902c"/><rect x="447" y="305" width="5" height="5" fill="#bc8520"/><rect x="452" y="305" width="5" height="5" fill="#a06200"/><rect x="457" y="305" width="5" height="5" fill="#8a4c00"/><rect x="462" y="305" width="5" height="5" fill="#763a00"/><rect x="467" y="305" width="10" height="5" fill="#6e3300"/><rect x="477" y="305" width="5" height="5" fill="#763a00"/><rect x="482" y="305" width="30" height="5" fill="#804300"/><rect x="512" y="305" width="55" height="5" fill="#8a4c00"/><rect x="267" y="310" width="50" height="5" fill="#b47a14"/><rect x="317" y="310" width="5" height="5" fill="#aa6e0a"/><rect x="322" y="310" width="5" height="5" fill="#a06200"/><rect x="327" y="310" width="5" height="5" fill="#955700"/><rect x="332" y="310" width="5" height="5" fill="#804300"/><rect x="337" y="310" width="15" height="5" fill="#763a00"/><rect x="352" y="310" width="5" height="5" fill="#804300"/><rect x="357" y="310" width="10" height="5" fill="#8a4c00"/><rect x="367" y="310" width="5" height="5" fill="#763a00"/><rect x="372" y="310" width="5" height="5" fill="#6e3300"/><rect x="377" y="310" width="5" height="5" fill="#662c00"/><rect x="382" y="310" width="10" height="5" fill="#5f2800"/><rect x="392" y="310" width="5" height="5" fill="#662c00"/><rect x="397" y="310" width="5" height="5" fill="#6e3300"/><rect x="402" y="310" width="5" height="5" fill="#804300"/><rect x="407" y="310" width="10" height="5" fill="#8a4c00"/><rect x="417" y="310" width="5" height="5" fill="#955700"/><rect x="422" y="310" width="5" height="5" fill="#a06200"/><rect x="427" y="310" width="5" height="5" fill="#b47a14"/><rect x="432" y="310" width="5" height="5" fill="#c4902c"/><rect x="437" y="310" width="5" height="5" fill="#d0a448"/><rect x="442" y="310" width="5" height="5" fill="#ca9a3a"/><rect x="447" y="310" width="5" height="5" fill="#c4902c"/><rect x="452" y="310" width="5" height="5" fill="#aa6e0a"/><rect x="457" y="310" width="5" height="5" fill="#8a4c00"/><rect x="462" y="310" width="5" height="5" fill="#763a00"/><rect x="467" y="310" width="10" height="5" fill="#662c00"/><rect x="477" y="310" width="5" height="5" fill="#6e3300"/><rect x="482" y="310" width="25" height="5" fill="#763a00"/><rect x="507" y="310" width="5" height="5" fill="#804300"/><rect x="512" y="310" width="55" height="5" fill="#8a4c00"/><rect x="267" y="315" width="45" height="5" fill="#b47a14"/><rect x="312" y="315" width="10" height="5" fill="#aa6e0a"/><rect x="322" y="315" width="5" height="5" fill="#955700"/><rect x="327" y="315" width="5" height="5" fill="#8a4c00"/><rect x="332" y="315" width="5" height="5" fill="#804300"/><rect x="337" y="315" width="5" height="5" fill="#763a00"/><rect x="342" y="315" width="5" height="5" fill="#6e3300"/><rect x="347" y="315" width="5" height="5" fill="#763a00"/><rect x="352" y="315" width="5" height="5" fill="#804300"/><rect x="357" y="315" width="5" height="5" fill="#8a4c00"/><rect x="362" y="315" width="5" height="5" fill="#955700"/><rect x="367" y="315" width="5" height="5" fill="#804300"/><rect x="372" y="315" width="5" height="5" fill="#763a00"/><rect x="377" y="315" width="15" height="5" fill="#662c00"/><rect x="392" y="315" width="5" height="5" fill="#6e3300"/><rect x="397" y="315" width="5" height="5" fill="#763a00"/><rect x="402" y="315" width="5" height="5" fill="#8a4c00"/><rect x="407" y="315" width="10" height="5" fill="#955700"/><rect x="417" y="315" width="10" height="5" fill="#a06200"/><rect x="427" y="315" width="5" height="5" fill="#b47a14"/><rect x="432" y="315" width="5" height="5" fill="#c4902c"/><rect x="437" y="315" width="5" height="5" fill="#d0a448"/><rect x="442" y="315" width="5" height="5" fill="#ca9a3a"/><rect x="447" y="315" width="5" height="5" fill="#bc8520"/><rect x="452" y="315" width="5" height="5" fill="#a06200"/><rect x="457" y="315" width="5" height="5" fill="#8a4c00"/><rect x="462" y="315" width="5" height="5" fill="#6e3300"/><rect x="467" y="315" width="15" height="5" fill="#662c00"/><rect x="482" y="315" width="5" height="5" fill="#6e3300"/><rect x="487" y="315" width="20" height="5" fill="#763a00"/><rect x="507" y="315" width="5" height="5" fill="#804300"/><rect x="512" y="315" width="55" height="5" fill="#8a4c00"/><rect x="267" y="320" width="40" height="5" fill="#b47a14"/><rect x="307" y="320" width="5" height="5" fill="#aa6e0a"/><rect x="312" y="320" width="5" height="5" fill="#a06200"/><rect x="317" y="320" width="5" height="5" fill="#955700"/><rect x="322" y="320" width="5" height="5" fill="#8a4c00"/><rect x="327" y="320" width="5" height="5" fill="#804300"/><rect x="332" y="320" width="5" height="5" fill="#763a00"/><rect x="337" y="320" width="5" height="5" fill="#6e3300"/><rect x="342" y="320" width="5" height="5" fill="#662c00"/><rect x="347" y="320" width="5" height="5" fill="#6e3300"/><rect x="352" y="320" width="5" height="5" fill="#763a00"/><rect x="357" y="320" width="5" height="5" fill="#8a4c00"/><rect x="362" y="320" width="5" height="5" fill="#955700"/><rect x="367" y="320" width="5" height="5" fill="#8a4c00"/><rect x="372" y="320" width="5" height="5" fill="#763a00"/><rect x="377" y="320" width="15" height="5" fill="#6e3300"/><rect x="392" y="320" width="5" height="5" fill="#763a00"/><rect x="397" y="320" width="5" height="5" fill="#804300"/><rect x="402" y="320" width="5" height="5" fill="#8a4c00"/><rect x="407" y="320" width="10" height="5" fill="#955700"/><rect x="417" y="320" width="5" height="5" fill="#a06200"/><rect x="422" y="320" width="5" height="5" fill="#aa6e0a"/><rect x="427" y="320" width="5" height="5" fill="#b47a14"/><rect x="432" y="320" width="5" height="5" fill="#bc8520"/><rect x="437" y="320" width="10" height="5" fill="#c4902c"/><rect x="447" y="320" width="5" height="5" fill="#b47a14"/><rect x="452" y="320" width="5" height="5" fill="#a06200"/><rect x="457" y="320" width="5" height="5" fill="#804300"/><rect x="462" y="320" width="5" height="5" fill="#6e3300"/><rect x="467" y="320" width="20" height="5" fill="#662c00"/><rect x="487" y="320" width="10" height="5" fill="#6e3300"/><rect x="497" y="320" width="10" height="5" fill="#763a00"/><rect x="507" y="320" width="5" height="5" fill="#804300"/><rect x="512" y="320" width="55" height="5" fill="#8a4c00"/><rect x="267" y="325" width="35" height="5" fill="#b47a14"/><rect x="302" y="325" width="5" height="5" fill="#aa6e0a"/><rect x="307" y="325" width="5" height="5" fill="#a06200"/><rect x="312" y="325" width="5" height="5" fill="#955700"/><rect x="317" y="325" width="5" height="5" fill="#8a4c00"/><rect x="322" y="325" width="5" height="5" fill="#804300"/><rect x="327" y="325" width="5" height="5" fill="#763a00"/><rect x="332" y="325" width="5" height="5" fill="#6e3300"/><rect x="337" y="325" width="15" height="5" fill="#662c00"/><rect x="352" y="325" width="5" height="5" fill="#763a00"/><rect x="357" y="325" width="15" height="5" fill="#8a4c00"/><rect x="372" y="325" width="5" height="5" fill="#804300"/><rect x="377" y="325" width="5" height="5" fill="#763a00"/><rect x="382" y="325" width="5" height="5" fill="#6e3300"/><rect x="387" y="325" width="10" height="5" fill="#763a00"/><rect x="397" y="325" width="5" height="5" fill="#804300"/><rect x="402" y="325" width="10" height="5" fill="#8a4c00"/><rect x="412" y="325" width="10" height="5" fill="#955700"/><rect x="422" y="325" width="5" height="5" fill="#a06200"/><rect x="427" y="325" width="5" height="5" fill="#aa6e0a"/><rect x="432" y="325" width="15" height="5" fill="#b47a14"/><rect x="447" y="325" width="5" height="5" fill="#a06200"/><rect x="452" y="325" width="5" height="5" fill="#955700"/><rect x="457" y="325" width="5" height="5" fill="#804300"/><rect x="462" y="325" width="5" height="5" fill="#6e3300"/><rect x="467" y="325" width="25" height="5" fill="#662c00"/><rect x="492" y="325" width="5" height="5" fill="#6e3300"/><rect x="497" y="325" width="10" height="5" fill="#763a00"/><rect x="507" y="325" width="5" height="5" fill="#804300"/><rect x="512" y="325" width="55" height="5" fill="#8a4c00"/><rect x="267" y="330" width="35" height="5" fill="#b47a14"/><rect x="302" y="330" width="5" height="5" fill="#aa6e0a"/><rect x="307" y="330" width="5" height="5" fill="#955700"/><rect x="312" y="330" width="5" height="5" fill="#8a4c00"/><rect x="317" y="330" width="10" height="5" fill="#804300"/><rect x="327" y="330" width="10" height="5" fill="#763a00"/><rect x="337" y="330" width="15" height="5" fill="#6e3300"/><rect x="352" y="330" width="5" height="5" fill="#763a00"/><rect x="357" y="330" width="5" height="5" fill="#804300"/><rect x="362" y="330" width="5" height="5" fill="#8a4c00"/><rect x="367" y="330" width="5" height="5" fill="#804300"/><rect x="372" y="330" width="10" height="5" fill="#763a00"/><rect x="382" y="330" width="10" height="5" fill="#6e3300"/><rect x="392" y="330" width="10" height="5" fill="#763a00"/><rect x="402" y="330" width="10" height="5" fill="#804300"/><rect x="412" y="330" width="10" height="5" fill="#8a4c00"/><rect x="422" y="330" width="5" height="5" fill="#955700"/><rect x="427" y="330" width="5" height="5" fill="#a06200"/><rect x="432" y="330" width="10" height="5" fill="#aa6e0a"/><rect x="442" y="330" width="5" height="5" fill="#a06200"/><rect x="447" y="330" width="5" height="5" fill="#955700"/><rect x="452" y="330" width="5" height="5" fill="#8a4c00"/><rect x="457" y="330" width="5" height="5" fill="#804300"/><rect x="462" y="330" width="5" height="5" fill="#6e3300"/><rect x="467" y="330" width="10" height="5" fill="#662c00"/><rect x="477" y="330" width="5" height="5" fill="#5f2800"/><rect x="482" y="330" width="10" height="5" fill="#662c00"/><rect x="492" y="330" width="10" height="5" fill="#6e3300"/><rect x="502" y="330" width="5" height="5" fill="#763a00"/><rect x="507" y="330" width="10" height="5" fill="#804300"/><rect x="517" y="330" width="50" height="5" fill="#8a4c00"/><rect x="267" y="335" width="5" height="5" fill="#b47a14"/><rect x="272" y="335" width="15" height="5" fill="#aa6e0a"/><rect x="287" y="335" width="15" height="5" fill="#b47a14"/><rect x="302" y="335" width="5" height="5" fill="#a06200"/><rect x="307" y="335" width="5" height="5" fill="#955700"/><rect x="312" y="335" width="5" height="5" fill="#804300"/><rect x="317" y="335" width="10" height="5" fill="#763a00"/><rect x="327" y="335" width="40" height="5" fill="#804300"/><rect x="367" y="335" width="5" height="5" fill="#763a00"/><rect x="372" y="335" width="35" height="5" fill="#6e3300"/><rect x="407" y="335" width="10" height="5" fill="#763a00"/><rect x="417" y="335" width="5" height="5" fill="#804300"/><rect x="422" y="335" width="5" height="5" fill="#8a4c00"/><rect x="427" y="335" width="5" height="5" fill="#955700"/><rect x="432" y="335" width="10" height="5" fill="#a06200"/><rect x="442" y="335" width="10" height="5" fill="#955700"/><rect x="452" y="335" width="5" height="5" fill="#804300"/><rect x="457" y="335" width="5" height="5" fill="#763a00"/><rect x="462" y="335" width="5" height="5" fill="#6e3300"/><rect x="467" y="335" width="10" height="5" fill="#662c00"/><rect x="477" y="335" width="5" height="5" fill="#5f2800"/><rect x="482" y="335" width="10" height="5" fill="#662c00"/><rect x="492" y="335" width="10" height="5" fill="#6e3300"/><rect x="502" y="335" width="5" height="5" fill="#763a00"/><rect x="507" y="335" width="10" height="5" fill="#804300"/><rect x="517" y="335" width="10" height="5" fill="#8a4c00"/><rect x="527" y="335" width="40" height="5" fill="#955700"/><rect x="267" y="340" width="5" height="5" fill="#aa6e0a"/><rect x="272" y="340" width="10" height="5" fill="#a06200"/><rect x="282" y="340" width="20" height="5" fill="#aa6e0a"/><rect x="302" y="340" width="5" height="5" fill="#a06200"/><rect x="307" y="340" width="5" height="5" fill="#8a4c00"/><rect x="312" y="340" width="5" height="5" fill="#804300"/><rect x="317" y="340" width="10" height="5" fill="#763a00"/><rect x="327" y="340" width="5" height="5" fill="#804300"/><rect x="332" y="340" width="5" height="5" fill="#8a4c00"/><rect x="337" y="340" width="5" height="5" fill="#955700"/><rect x="342" y="340" width="5" height="5" fill="#a06200"/><rect x="347" y="340" width="5" height="5" fill="#955700"/><rect x="352" y="340" width="5" height="5" fill="#8a4c00"/><rect x="357" y="340" width="5" height="5" fill="#804300"/><rect x="362" y="340" width="5" height="5" fill="#763a00"/><rect x="367" y="340" width="5" height="5" fill="#6e3300"/><rect x="372" y="340" width="40" height="5" fill="#662c00"/><rect x="412" y="340" width="5" height="5" fill="#6e3300"/><rect x="417" y="340" width="5" height="5" fill="#763a00"/><rect x="422" y="340" width="10" height="5" fill="#804300"/><rect x="432" y="340" width="5" height="5" fill="#8a4c00"/><rect x="437" y="340" width="5" height="5" fill="#955700"/><rect x="442" y="340" width="10" height="5" fill="#8a4c00"/><rect x="452" y="340" width="5" height="5" fill="#804300"/><rect x="457" y="340" width="5" height="5" fill="#763a00"/><rect x="462" y="340" width="5" height="5" fill="#6e3300"/><rect x="467" y="340" width="25" height="5" fill="#662c00"/><rect x="492" y="340" width="10" height="5" fill="#6e3300"/><rect x="502" y="340" width="5" height="5" fill="#763a00"/><rect x="507" y="340" width="10" height="5" fill="#804300"/><rect x="517" y="340" width="5" height="5" fill="#8a4c00"/><rect x="522" y="340" width="10" height="5" fill="#955700"/><rect x="532" y="340" width="35" height="5" fill="#a06200"/><rect x="267" y="345" width="35" height="5" fill="#955700"/><rect x="302" y="345" width="5" height="5" fill="#8a4c00"/><rect x="307" y="345" width="5" height="5" fill="#804300"/><rect x="312" y="345" width="5" height="5" fill="#763a00"/><rect x="317" y="345" width="5" height="5" fill="#6e3300"/><rect x="322" y="345" width="5" height="5" fill="#763a00"/><rect x="327" y="345" width="5" height="5" fill="#804300"/><rect x="332" y="345" width="5" height="5" fill="#955700"/><rect x="337" y="345" width="5" height="5" fill="#a06200"/><rect x="342" y="345" width="5" height="5" fill="#aa6e0a"/><rect x="347" y="345" width="5" height="5" fill="#a06200"/><rect x="352" y="345" width="5" height="5" fill="#955700"/><rect x="357" y="345" width="5" height="5" fill="#804300"/><rect x="362" y="345" width="5" height="5" fill="#6e3300"/><rect x="367" y="345" width="55" height="5" fill="#662c00"/><rect x="422" y="345" width="5" height="5" fill="#6e3300"/><rect x="427" y="345" width="10" height="5" fill="#763a00"/><rect x="437" y="345" width="10" height="5" fill="#804300"/><rect x="447" y="345" width="5" height="5" fill="#763a00"/><rect x="452" y="345" width="10" height="5" fill="#6e3300"/><rect x="462" y="345" width="25" height="5" fill="#662c00"/><rect x="487" y="345" width="10" height="5" fill="#6e3300"/><rect x="497" y="345" width="5" height="5" fill="#763a00"/><rect x="502" y="345" width="5" height="5" fill="#804300"/><rect x="507" y="345" width="10" height="5" fill="#8a4c00"/><rect x="517" y="345" width="5" height="5" fill="#955700"/><rect x="522" y="345" width="10" height="5" fill="#a06200"/><rect x="532" y="345" width="15" height="5" fill="#aa6e0a"/><rect x="547" y="345" width="20" height="5" fill="#a06200"/><rect x="267" y="350" width="35" height="5" fill="#804300"/><rect x="302" y="350" width="5" height="5" fill="#763a00"/><rect x="307" y="350" width="20" height="5" fill="#6e3300"/><rect x="327" y="350" width="5" height="5" fill="#804300"/><rect x="332" y="350" width="5" height="5" fill="#8a4c00"/><rect x="337" y="350" width="15" height="5" fill="#a06200"/><rect x="352" y="350" width="5" height="5" fill="#8a4c00"/><rect x="357" y="350" width="5" height="5" fill="#763a00"/><rect x="362" y="350" width="55" height="5" fill="#662c00"/><rect x="417" y="350" width="10" height="5" fill="#5f2800"/><rect x="427" y="350" width="55" height="5" fill="#662c00"/><rect x="482" y="350" width="10" height="5" fill="#6e3300"/><rect x="492" y="350" width="5" height="5" fill="#763a00"/><rect x="497" y="350" width="5" height="5" fill="#804300"/><rect x="502" y="350" width="5" height="5" fill="#8a4c00"/><rect x="507" y="350" width="5" height="5" fill="#955700"/><rect x="512" y="350" width="10" height="5" fill="#a06200"/><rect x="522" y="350" width="45" height="5" fill="#aa6e0a"/><rect x="267" y="355" width="35" height="5" fill="#763a00"/><rect x="302" y="355" width="10" height="5" fill="#6e3300"/><rect x="312" y="355" width="10" height="5" fill="#662c00"/><rect x="322" y="355" width="5" height="5" fill="#6e3300"/><rect x="327" y="355" width="5" height="5" fill="#763a00"/><rect x="332" y="355" width="5" height="5" fill="#804300"/><rect x="337" y="355" width="5" height="5" fill="#8a4c00"/><rect x="342" y="355" width="5" height="5" fill="#955700"/><rect x="347" y="355" width="5" height="5" fill="#8a4c00"/><rect x="352" y="355" width="5" height="5" fill="#804300"/><rect x="357" y="355" width="5" height="5" fill="#6e3300"/><rect x="362" y="355" width="50" height="5" fill="#662c00"/><rect x="412" y="355" width="10" height="5" fill="#5f2800"/><rect x="422" y="355" width="15" height="5" fill="#582400"/><rect x="437" y="355" width="10" height="5" fill="#5f2800"/><rect x="447" y="355" width="10" height="5" fill="#582400"/><rect x="457" y="355" width="10" height="5" fill="#5f2800"/><rect x="467" y="355" width="10" height="5" fill="#662c00"/><rect x="477" y="355" width="10" height="5" fill="#6e3300"/><rect x="487" y="355" width="5" height="5" fill="#763a00"/><rect x="492" y="355" width="5" height="5" fill="#804300"/><rect x="497" y="355" width="5" height="5" fill="#955700"/><rect x="502" y="355" width="5" height="5" fill="#a06200"/><rect x="507" y="355" width="10" height="5" fill="#aa6e0a"/><rect x="517" y="355" width="50" height="5" fill="#b47a14"/><rect x="267" y="360" width="35" height="5" fill="#804300"/><rect x="302" y="360" width="5" height="5" fill="#763a00"/><rect x="307" y="360" width="5" height="5" fill="#6e3300"/><rect x="312" y="360" width="15" height="5" fill="#662c00"/><rect x="327" y="360" width="5" height="5" fill="#6e3300"/><rect x="332" y="360" width="5" height="5" fill="#763a00"/><rect x="337" y="360" width="15" height="5" fill="#804300"/><rect x="352" y="360" width="5" height="5" fill="#763a00"/><rect x="357" y="360" width="10" height="5" fill="#662c00"/><rect x="367" y="360" width="5" height="5" fill="#5f2800"/><rect x="372" y="360" width="40" height="5" fill="#662c00"/><rect x="412" y="360" width="10" height="5" fill="#5f2800"/><rect x="422" y="360" width="25" height="5" fill="#582400"/><rect x="447" y="360" width="5" height="5" fill="#552200"/><rect x="452" y="360" width="10" height="5" fill="#582400"/><rect x="462" y="360" width="5" height="5" fill="#5f2800"/><rect x="467" y="360" width="10" height="5" fill="#662c00"/><rect x="477" y="360" width="5" height="5" fill="#6e3300"/><rect x="482" y="360" width="5" height="5" fill="#763a00"/><rect x="487" y="360" width="5" height="5" fill="#804300"/><rect x="492" y="360" width="5" height="5" fill="#8a4c00"/><rect x="497" y="360" width="5" height="5" fill="#a06200"/><rect x="502" y="360" width="5" height="5" fill="#aa6e0a"/><rect x="507" y="360" width="60" height="5" fill="#b47a14"/><rect x="267" y="365" width="5" height="5" fill="#a06200"/><rect x="272" y="365" width="10" height="5" fill="#955700"/><rect x="282" y="365" width="20" height="5" fill="#a06200"/><rect x="302" y="365" width="5" height="5" fill="#955700"/><rect x="307" y="365" width="5" height="5" fill="#804300"/><rect x="312" y="365" width="5" height="5" fill="#763a00"/><rect x="317" y="365" width="35" height="5" fill="#6e3300"/><rect x="352" y="365" width="10" height="5" fill="#662c00"/><rect x="362" y="365" width="30" height="5" fill="#5f2800"/><rect x="392" y="365" width="20" height="5" fill="#662c00"/><rect x="412" y="365" width="10" height="5" fill="#5f2800"/><rect x="422" y="365" width="25" height="5" fill="#582400"/><rect x="447" y="365" width="10" height="5" fill="#552200"/><rect x="457" y="365" width="10" height="5" fill="#582400"/><rect x="467" y="365" width="5" height="5" fill="#5f2800"/><rect x="472" y="365" width="5" height="5" fill="#6e3300"/><rect x="477" y="365" width="5" height="5" fill="#763a00"/><rect x="482" y="365" width="5" height="5" fill="#804300"/><rect x="487" y="365" width="5" height="5" fill="#8a4c00"/><rect x="492" y="365" width="5" height="5" fill="#a06200"/><rect x="497" y="365" width="5" height="5" fill="#aa6e0a"/><rect x="502" y="365" width="20" height="5" fill="#b47a14"/><rect x="522" y="365" width="45" height="5" fill="#bc8520"/><rect x="267" y="370" width="10" height="5" fill="#bc8520"/><rect x="277" y="370" width="5" height="5" fill="#b47a14"/><rect x="282" y="370" width="20" height="5" fill="#bc8520"/><rect x="302" y="370" width="5" height="5" fill="#aa6e0a"/><rect x="307" y="370" width="5" height="5" fill="#955700"/><rect x="312" y="370" width="5" height="5" fill="#804300"/><rect x="317" y="370" width="10" height="5" fill="#763a00"/><rect x="327" y="370" width="15" height="5" fill="#6e3300"/><rect x="342" y="370" width="25" height="5" fill="#662c00"/><rect x="367" y="370" width="10" height="5" fill="#5f2800"/><rect x="377" y="370" width="15" height="5" fill="#582400"/><rect x="392" y="370" width="25" height="5" fill="#5f2800"/><rect x="417" y="370" width="35" height="5" fill="#582400"/><rect x="452" y="370" width="5" height="5" fill="#552200"/><rect x="457" y="370" width="5" height="5" fill="#582400"/><rect x="462" y="370" width="5" height="5" fill="#5f2800"/><rect x="467" y="370" width="5" height="5" fill="#662c00"/><rect x="472" y="370" width="5" height="5" fill="#763a00"/><rect x="477" y="370" width="5" height="5" fill="#8a4c00"/><rect x="482" y="370" width="5" height="5" fill="#955700"/><rect x="487" y="370" width="5" height="5" fill="#aa6e0a"/><rect x="492" y="370" width="10" height="5" fill="#b47a14"/><rect x="502" y="370" width="65" height="5" fill="#bc8520"/><rect x="267" y="375" width="5" height="5" fill="#ca9a3a"/><rect x="272" y="375" width="10" height="5" fill="#c4902c"/><rect x="282" y="375" width="20" height="5" fill="#ca9a3a"/><rect x="302" y="375" width="5" height="5" fill="#bc8520"/><rect x="307" y="375" width="5" height="5" fill="#aa6e0a"/><rect x="312" y="375" width="5" height="5" fill="#955700"/><rect x="317" y="375" width="5" height="5" fill="#8a4c00"/><rect x="322" y="375" width="10" height="5" fill="#804300"/><rect x="332" y="375" width="10" height="5" fill="#763a00"/><rect x="342" y="375" width="15" height="5" fill="#6e3300"/><rect x="357" y="375" width="10" height="5" fill="#662c00"/><rect x="367" y="375" width="5" height="5" fill="#5f2800"/><rect x="372" y="375" width="10" height="5" fill="#582400"/><rect x="382" y="375" width="35" height="5" fill="#552200"/><rect x="417" y="375" width="40" height="5" fill="#582400"/><rect x="457" y="375" width="5" height="5" fill="#5f2800"/><rect x="462" y="375" width="5" height="5" fill="#6e3300"/><rect x="467" y="375" width="5" height="5" fill="#804300"/><rect x="472" y="375" width="5" height="5" fill="#955700"/><rect x="477" y="375" width="5" height="5" fill="#aa6e0a"/><rect x="482" y="375" width="5" height="5" fill="#bc8520"/><rect x="487" y="375" width="5" height="5" fill="#c4902c"/><rect x="492" y="375" width="75" height="5" fill="#ca9a3a"/><rect x="267" y="380" width="35" height="5" fill="#ca9a3a"/><rect x="302" y="380" width="5" height="5" fill="#c4902c"/><rect x="307" y="380" width="5" height="5" fill="#bc8520"/><rect x="312" y="380" width="5" height="5" fill="#b47a14"/><rect x="317" y="380" width="5" height="5" fill="#aa6e0a"/><rect x="322" y="380" width="5" height="5" fill="#a06200"/><rect x="327" y="380" width="10" height="5" fill="#955700"/><rect x="337" y="380" width="10" height="5" fill="#8a4c00"/><rect x="347" y="380" width="10" height="5" fill="#804300"/><rect x="357" y="380" width="5" height="5" fill="#763a00"/><rect x="362" y="380" width="5" height="5" fill="#6e3300"/><rect x="367" y="380" width="5" height="5" fill="#662c00"/><rect x="372" y="380" width="5" height="5" fill="#5f2800"/><rect x="377" y="380" width="5" height="5" fill="#582400"/><rect x="382" y="380" width="10" height="5" fill="#552200"/><rect x="392" y="380" width="30" height="5" fill="#522100"/><rect x="422" y="380" width="20" height="5" fill="#552200"/><rect x="442" y="380" width="5" height="5" fill="#582400"/><rect x="447" y="380" width="5" height="5" fill="#5f2800"/><rect x="452" y="380" width="5" height="5" fill="#662c00"/><rect x="457" y="380" width="5" height="5" fill="#763a00"/><rect x="462" y="380" width="5" height="5" fill="#8a4c00"/><rect x="467" y="380" width="5" height="5" fill="#aa6e0a"/><rect x="472" y="380" width="5" height="5" fill="#bc8520"/><rect x="477" y="380" width="5" height="5" fill="#d0a448"/><rect x="482" y="380" width="5" height="5" fill="#d8b464"/><rect x="487" y="380" width="5" height="5" fill="#dcbb6f"/><rect x="492" y="380" width="10" height="5" fill="#e0c27a"/><rect x="502" y="380" width="15" height="5" fill="#dcbb6f"/><rect x="517" y="380" width="10" height="5" fill="#d8b464"/><rect x="527" y="380" width="40" height="5" fill="#d4ac56"/><rect x="267" y="385" width="25" height="5" fill="#c4902c"/><rect x="292" y="385" width="5" height="5" fill="#ca9a3a"/><rect x="297" y="385" width="15" height="5" fill="#c4902c"/><rect x="312" y="385" width="10" height="5" fill="#bc8520"/><rect x="322" y="385" width="25" height="5" fill="#b47a14"/><rect x="347" y="385" width="5" height="5" fill="#aa6e0a"/><rect x="352" y="385" width="5" height="5" fill="#a06200"/><rect x="357" y="385" width="5" height="5" fill="#955700"/><rect x="362" y="385" width="5" height="5" fill="#804300"/><rect x="367" y="385" width="5" height="5" fill="#763a00"/><rect x="372" y="385" width="5" height="5" fill="#6e3300"/><rect x="377" y="385" width="5" height="5" fill="#662c00"/><rect x="382" y="385" width="5" height="5" fill="#582400"/><rect x="387" y="385" width="5" height="5" fill="#552200"/><rect x="392" y="385" width="20" height="5" fill="#522100"/><rect x="412" y="385" width="25" height="5" fill="#552200"/><rect x="437" y="385" width="5" height="5" fill="#582400"/><rect x="442" y="385" width="5" height="5" fill="#5f2800"/><rect x="447" y="385" width="5" height="5" fill="#662c00"/><rect x="452" y="385" width="5" height="5" fill="#763a00"/><rect x="457" y="385" width="5" height="5" fill="#955700"/><rect x="462" y="385" width="5" height="5" fill="#b47a14"/><rect x="467" y="385" width="5" height="5" fill="#d0a448"/><rect x="472" y="385" width="5" height="5" fill="#dcbb6f"/><rect x="477" y="385" width="5" height="5" fill="#e4c985"/><rect x="482" y="385" width="5" height="5" fill="#ecd69f"/><rect x="487" y="385" width="20" height="5" fill="#efddae"/><rect x="507" y="385" width="10" height="5" fill="#ecd69f"/><rect x="517" y="385" width="5" height="5" fill="#e8d090"/><rect x="522" y="385" width="5" height="5" fill="#e4c985"/><rect x="527" y="385" width="10" height="5" fill="#dcbb6f"/><rect x="537" y="385" width="5" height="5" fill="#d8b464"/><rect x="542" y="385" width="25" height="5" fill="#dcbb6f"/><rect x="267" y="390" width="60" height="5" fill="#c4902c"/><rect x="327" y="390" width="25" height="5" fill="#ca9a3a"/><rect x="352" y="390" width="5" height="5" fill="#c4902c"/><rect x="357" y="390" width="5" height="5" fill="#b47a14"/><rect x="362" y="390" width="5" height="5" fill="#aa6e0a"/><rect x="367" y="390" width="5" height="5" fill="#955700"/><rect x="372" y="390" width="5" height="5" fill="#8a4c00"/><rect x="377" y="390" width="5" height="5" fill="#804300"/><rect x="382" y="390" width="5" height="5" fill="#6e3300"/><rect x="387" y="390" width="5" height="5" fill="#662c00"/><rect x="392" y="390" width="35" height="5" fill="#5f2800"/><rect x="427" y="390" width="10" height="5" fill="#662c00"/><rect x="437" y="390" width="5" height="5" fill="#6e3300"/><rect x="442" y="390" width="5" height="5" fill="#804300"/><rect x="447" y="390" width="5" height="5" fill="#955700"/><rect x="452" y="390" width="5" height="5" fill="#aa6e0a"/><rect x="457" y="390" width="5" height="5" fill="#c4902c"/><rect x="462" y="390" width="5" height="5" fill="#d4ac56"/><rect x="467" y="390" width="5" height="5" fill="#e0c27a"/><rect x="472" y="390" width="5" height="5" fill="#ecd69f"/><rect x="477" y="390" width="5" height="5" fill="#f2e4bd"/><rect x="482" y="390" width="5" height="5" fill="#f6eacc"/><rect x="487" y="390" width="20" height="5" fill="#f7edd3"/><rect x="507" y="390" width="5" height="5" fill="#f6eacc"/><rect x="512" y="390" width="5" height="5" fill="#f2e4bd"/><rect x="517" y="390" width="5" height="5" fill="#efddae"/><rect x="522" y="390" width="5" height="5" fill="#ecd69f"/><rect x="527" y="390" width="5" height="5" fill="#e4c985"/><rect x="532" y="390" width="20" height="5" fill="#e0c27a"/><rect x="552" y="390" width="10" height="5" fill="#e4c985"/><rect x="562" y="390" width="5" height="5" fill="#e0c27a"/><rect x="267" y="395" width="50" height="5" fill="#c4902c"/><rect x="317" y="395" width="10" height="5" fill="#ca9a3a"/><rect x="327" y="395" width="5" height="5" fill="#d0a448"/><rect x="332" y="395" width="5" height="5" fill="#d4ac56"/><rect x="337" y="395" width="15" height="5" fill="#d8b464"/><rect x="352" y="395" width="5" height="5" fill="#d4ac56"/><rect x="357" y="395" width="5" height="5" fill="#d0a448"/><rect x="362" y="395" width="5" height="5" fill="#ca9a3a"/><rect x="367" y="395" width="5" height="5" fill="#c4902c"/><rect x="372" y="395" width="5" height="5" fill="#bc8520"/><rect x="377" y="395" width="5" height="5" fill="#b47a14"/><rect x="382" y="395" width="5" height="5" fill="#aa6e0a"/><rect x="387" y="395" width="10" height="5" fill="#955700"/><rect x="397" y="395" width="10" height="5" fill="#8a4c00"/><rect x="407" y="395" width="10" height="5" fill="#955700"/><rect x="417" y="395" width="5" height="5" fill="#8a4c00"/><rect x="422" y="395" width="10" height="5" fill="#955700"/><rect x="432" y="395" width="5" height="5" fill="#a06200"/><rect x="437" y="395" width="5" height="5" fill="#aa6e0a"/><rect x="442" y="395" width="5" height="5" fill="#bc8520"/><rect x="447" y="395" width="5" height="5" fill="#ca9a3a"/><rect x="452" y="395" width="5" height="5" fill="#d4ac56"/><rect x="457" y="395" width="5" height="5" fill="#dcbb6f"/><rect x="462" y="395" width="5" height="5" fill="#e8d090"/><rect x="467" y="395" width="5" height="5" fill="#efddae"/><rect x="472" y="395" width="5" height="5" fill="#f6eacc"/><rect x="477" y="395" width="5" height="5" fill="#f7edd3"/><rect x="482" y="395" width="25" height="5" fill="#f8f0da"/><rect x="507" y="395" width="10" height="5" fill="#f7edd3"/><rect x="517" y="395" width="5" height="5" fill="#f2e4bd"/><rect x="522" y="395" width="5" height="5" fill="#efddae"/><rect x="527" y="395" width="5" height="5" fill="#e8d090"/><rect x="532" y="395" width="20" height="5" fill="#e4c985"/><rect x="552" y="395" width="5" height="5" fill="#e8d090"/><rect x="557" y="395" width="10" height="5" fill="#e4c985"/><rect x="267" y="400" width="50" height="5" fill="#c4902c"/><rect x="317" y="400" width="5" height="5" fill="#ca9a3a"/><rect x="322" y="400" width="5" height="5" fill="#d0a448"/><rect x="327" y="400" width="5" height="5" fill="#d4ac56"/><rect x="332" y="400" width="5" height="5" fill="#d8b464"/><rect x="337" y="400" width="5" height="5" fill="#e0c27a"/><rect x="342" y="400" width="15" height="5" fill="#e4c985"/><rect x="357" y="400" width="5" height="5" fill="#e0c27a"/><rect x="362" y="400" width="10" height="5" fill="#dcbb6f"/><rect x="372" y="400" width="5" height="5" fill="#d8b464"/><rect x="377" y="400" width="5" height="5" fill="#d4ac56"/><rect x="382" y="400" width="5" height="5" fill="#d0a448"/><rect x="387" y="400" width="5" height="5" fill="#ca9a3a"/><rect x="392" y="400" width="15" height="5" fill="#c4902c"/><rect x="407" y="400" width="5" height="5" fill="#ca9a3a"/><rect x="412" y="400" width="15" height="5" fill="#c4902c"/><rect x="427" y="400" width="5" height="5" fill="#ca9a3a"/><rect x="432" y="400" width="5" height="5" fill="#d0a448"/><rect x="437" y="400" width="5" height="5" fill="#d8b464"/><rect x="442" y="400" width="5" height="5" fill="#dcbb6f"/><rect x="447" y="400" width="5" height="5" fill="#e4c985"/><rect x="452" y="400" width="5" height="5" fill="#e8d090"/><rect x="457" y="400" width="5" height="5" fill="#efddae"/><rect x="462" y="400" width="5" height="5" fill="#f2e4bd"/><rect x="467" y="400" width="10" height="5" fill="#f7edd3"/><rect x="477" y="400" width="35" height="5" fill="#f8f0da"/><rect x="512" y="400" width="5" height="5" fill="#f7edd3"/><rect x="517" y="400" width="5" height="5" fill="#f6eacc"/><rect x="522" y="400" width="5" height="5" fill="#efddae"/><rect x="527" y="400" width="5" height="5" fill="#ecd69f"/><rect x="532" y="400" width="5" height="5" fill="#e8d090"/><rect x="537" y="400" width="5" height="5" fill="#e4c985"/><rect x="542" y="400" width="25" height="5" fill="#e8d090"/><rect x="267" y="405" width="50" height="5" fill="#c4902c"/><rect x="317" y="405" width="5" height="5" fill="#ca9a3a"/><rect x="322" y="405" width="5" height="5" fill="#d0a448"/><rect x="327" y="405" width="5" height="5" fill="#d4ac56"/><rect x="332" y="405" width="5" height="5" fill="#dcbb6f"/><rect x="337" y="405" width="5" height="5" fill="#e4c985"/><rect x="342" y="405" width="10" height="5" fill="#e8d090"/><rect x="352" y="405" width="10" height="5" fill="#ecd69f"/><rect x="362" y="405" width="10" height="5" fill="#e8d090"/><rect x="372" y="405" width="5" height="5" fill="#e4c985"/><rect x="377" y="405" width="10" height="5" fill="#e0c27a"/><rect x="387" y="405" width="25" height="5" fill="#dcbb6f"/><rect x="412" y="405" width="10" height="5" fill="#d8b464"/><rect x="422" y="405" width="10" height="5" fill="#dcbb6f"/><rect x="432" y="405" width="5" height="5" fill="#e4c985"/><rect x="437" y="405" width="5" height="5" fill="#e8d090"/><rect x="442" y="405" width="5" height="5" fill="#efddae"/><rect x="447" y="405" width="5" height="5" fill="#f2e4bd"/><rect x="452" y="405" width="5" height="5" fill="#f6eacc"/><rect x="457" y="405" width="5" height="5" fill="#f7edd3"/><rect x="462" y="405" width="45" height="5" fill="#f8f0da"/><rect x="507" y="405" width="10" height="5" fill="#f7edd3"/><rect x="517" y="405" width="5" height="5" fill="#f6eacc"/><rect x="522" y="405" width="5" height="5" fill="#efddae"/><rect x="527" y="405" width="5" height="5" fill="#ecd69f"/><rect x="532" y="405" width="35" height="5" fill="#e8d090"/><rect x="267" y="410" width="55" height="5" fill="#c4902c"/><rect x="322" y="410" width="5" height="5" fill="#d0a448"/><rect x="327" y="410" width="5" height="5" fill="#d4ac56"/><rect x="332" y="410" width="5" height="5" fill="#dcbb6f"/><rect x="337" y="410" width="5" height="5" fill="#e4c985"/><rect x="342" y="410" width="5" height="5" fill="#e8d090"/><rect x="347" y="410" width="25" height="5" fill="#ecd69f"/><rect x="372" y="410" width="5" height="5" fill="#e8d090"/><rect x="377" y="410" width="10" height="5" fill="#e4c985"/><rect x="387" y="410" width="30" height="5" fill="#e0c27a"/><rect x="417" y="410" width="5" height="5" fill="#dcbb6f"/><rect x="422" y="410" width="5" height="5" fill="#e0c27a"/><rect x="427" y="410" width="5" height="5" fill="#e4c985"/><rect x="432" y="410" width="5" height="5" fill="#e8d090"/><rect x="437" y="410" width="5" height="5" fill="#efddae"/><rect x="442" y="410" width="5" height="5" fill="#f2e4bd"/><rect x="447" y="410" width="5" height="5" fill="#f6eacc"/><rect x="452" y="410" width="5" height="5" fill="#f7edd3"/><rect x="457" y="410" width="50" height="5" fill="#f8f0da"/><rect x="507" y="410" width="10" height="5" fill="#f7edd3"/><rect x="517" y="410" width="5" height="5" fill="#f6eacc"/><rect x="522" y="410" width="5" height="5" fill="#efddae"/><rect x="527" y="410" width="5" height="5" fill="#ecd69f"/><rect x="532" y="410" width="35" height="5" fill="#e8d090"/><rect x="267" y="415" width="55" height="5" fill="#c4902c"/><rect x="322" y="415" width="5" height="5" fill="#d0a448"/><rect x="327" y="415" width="5" height="5" fill="#d4ac56"/><rect x="332" y="415" width="5" height="5" fill="#dcbb6f"/><rect x="337" y="415" width="5" height="5" fill="#e4c985"/><rect x="342" y="415" width="5" height="5" fill="#e8d090"/><rect x="347" y="415" width="15" height="5" fill="#ecd69f"/><rect x="362" y="415" width="10" height="5" fill="#e8d090"/><rect x="372" y="415" width="10" height="5" fill="#e4c985"/><rect x="382" y="415" width="5" height="5" fill="#e0c27a"/><rect x="387" y="415" width="40" height="5" fill="#dcbb6f"/><rect x="427" y="415" width="5" height="5" fill="#e0c27a"/><rect x="432" y="415" width="5" height="5" fill="#e4c985"/><rect x="437" y="415" width="5" height="5" fill="#ecd69f"/><rect x="442" y="415" width="5" height="5" fill="#efddae"/><rect x="447" y="415" width="5" height="5" fill="#f6eacc"/><rect x="452" y="415" width="10" height="5" fill="#f7edd3"/><rect x="462" y="415" width="45" height="5" fill="#f8f0da"/><rect x="507" y="415" width="10" height="5" fill="#f7edd3"/><rect x="517" y="415" width="5" height="5" fill="#f6eacc"/><rect x="522" y="415" width="5" height="5" fill="#efddae"/><rect x="527" y="415" width="5" height="5" fill="#ecd69f"/><rect x="532" y="415" width="35" height="5" fill="#e8d090"/><rect x="267" y="420" width="50" height="5" fill="#c4902c"/><rect x="317" y="420" width="5" height="5" fill="#ca9a3a"/><rect x="322" y="420" width="5" height="5" fill="#d0a448"/><rect x="327" y="420" width="5" height="5" fill="#d4ac56"/><rect x="332" y="420" width="5" height="5" fill="#dcbb6f"/><rect x="337" y="420" width="5" height="5" fill="#e0c27a"/><rect x="342" y="420" width="25" height="5" fill="#e8d090"/><rect x="367" y="420" width="5" height="5" fill="#e4c985"/><rect x="372" y="420" width="10" height="5" fill="#e0c27a"/><rect x="382" y="420" width="5" height="5" fill="#dcbb6f"/><rect x="387" y="420" width="40" height="5" fill="#d8b464"/><rect x="427" y="420" width="5" height="5" fill="#dcbb6f"/><rect x="432" y="420" width="5" height="5" fill="#e0c27a"/><rect x="437" y="420" width="5" height="5" fill="#e8d090"/><rect x="442" y="420" width="5" height="5" fill="#ecd69f"/><rect x="447" y="420" width="5" height="5" fill="#efddae"/><rect x="452" y="420" width="5" height="5" fill="#f6eacc"/><rect x="457" y="420" width="10" height="5" fill="#f7edd3"/><rect x="467" y="420" width="40" height="5" fill="#f8f0da"/><rect x="507" y="420" width="10" height="5" fill="#f7edd3"/><rect x="517" y="420" width="5" height="5" fill="#f6eacc"/><rect x="522" y="420" width="5" height="5" fill="#efddae"/><rect x="527" y="420" width="5" height="5" fill="#ecd69f"/><rect x="532" y="420" width="35" height="5" fill="#e8d090"/><rect x="267" y="425" width="50" height="5" fill="#c4902c"/><rect x="317" y="425" width="5" height="5" fill="#ca9a3a"/><rect x="322" y="425" width="5" height="5" fill="#d0a448"/><rect x="327" y="425" width="5" height="5" fill="#d4ac56"/><rect x="332" y="425" width="5" height="5" fill="#dcbb6f"/><rect x="337" y="425" width="5" height="5" fill="#e0c27a"/><rect x="342" y="425" width="5" height="5" fill="#e4c985"/><rect x="347" y="425" width="20" height="5" fill="#e8d090"/><rect x="367" y="425" width="5" height="5" fill="#e4c985"/><rect x="372" y="425" width="5" height="5" fill="#e0c27a"/><rect x="377" y="425" width="10" height="5" fill="#dcbb6f"/><rect x="387" y="425" width="10" height="5" fill="#d8b464"/><rect x="397" y="425" width="5" height="5" fill="#d4ac56"/><rect x="402" y="425" width="10" height="5" fill="#d8b464"/><rect x="412" y="425" width="10" height="5" fill="#d4ac56"/><rect x="422" y="425" width="10" height="5" fill="#d8b464"/><rect x="432" y="425" width="5" height="5" fill="#e0c27a"/><rect x="437" y="425" width="5" height="5" fill="#e4c985"/><rect x="442" y="425" width="5" height="5" fill="#ecd69f"/><rect x="447" y="425" width="5" height="5" fill="#efddae"/><rect x="452" y="425" width="5" height="5" fill="#f2e4bd"/><rect x="457" y="425" width="5" height="5" fill="#f6eacc"/><rect x="462" y="425" width="5" height="5" fill="#f7edd3"/><rect x="467" y="425" width="45" height="5" fill="#f8f0da"/><rect x="512" y="425" width="5" height="5" fill="#f7edd3"/><rect x="517" y="425" width="5" height="5" fill="#f6eacc"/><rect x="522" y="425" width="5" height="5" fill="#efddae"/><rect x="527" y="425" width="5" height="5" fill="#ecd69f"/><rect x="532" y="425" width="35" height="5" fill="#e8d090"/><rect x="267" y="430" width="50" height="5" fill="#c4902c"/><rect x="317" y="430" width="5" height="5" fill="#ca9a3a"/><rect x="322" y="430" width="5" height="5" fill="#d0a448"/><rect x="327" y="430" width="5" height="5" fill="#d4ac56"/><rect x="332" y="430" width="5" height="5" fill="#dcbb6f"/><rect x="337" y="430" width="5" height="5" fill="#e0c27a"/><rect x="342" y="430" width="5" height="5" fill="#e4c985"/><rect x="347" y="430" width="20" height="5" fill="#e8d090"/><rect x="367" y="430" width="5" height="5" fill="#e4c985"/><rect x="372" y="430" width="10" height="5" fill="#e0c27a"/><rect x="382" y="430" width="5" height="5" fill="#dcbb6f"/><rect x="387" y="430" width="30" height="5" fill="#d8b464"/><rect x="417" y="430" width="5" height="5" fill="#d4ac56"/><rect x="422" y="430" width="5" height="5" fill="#d8b464"/><rect x="427" y="430" width="5" height="5" fill="#dcbb6f"/><rect x="432" y="430" width="5" height="5" fill="#e0c27a"/><rect x="437" y="430" width="5" height="5" fill="#e4c985"/><rect x="442" y="430" width="5" height="5" fill="#ecd69f"/><rect x="447" y="430" width="5" height="5" fill="#efddae"/><rect x="452" y="430" width="5" height="5" fill="#f2e4bd"/><rect x="457" y="430" width="5" height="5" fill="#f6eacc"/><rect x="462" y="430" width="5" height="5" fill="#f7edd3"/><rect x="467" y="430" width="45" height="5" fill="#f8f0da"/><rect x="512" y="430" width="5" height="5" fill="#f7edd3"/><rect x="517" y="430" width="5" height="5" fill="#f6eacc"/><rect x="522" y="430" width="5" height="5" fill="#efddae"/><rect x="527" y="430" width="5" height="5" fill="#ecd69f"/><rect x="532" y="430" width="35" height="5" fill="#e8d090"/><rect x="267" y="435" width="50" height="5" fill="#c4902c"/><rect x="317" y="435" width="5" height="5" fill="#ca9a3a"/><rect x="322" y="435" width="5" height="5" fill="#d0a448"/><rect x="327" y="435" width="5" height="5" fill="#d4ac56"/><rect x="332" y="435" width="5" height="5" fill="#dcbb6f"/><rect x="337" y="435" width="5" height="5" fill="#e0c27a"/><rect x="342" y="435" width="25" height="5" fill="#e8d090"/><rect x="367" y="435" width="10" height="5" fill="#e4c985"/><rect x="377" y="435" width="5" height="5" fill="#e0c27a"/><rect x="382" y="435" width="5" height="5" fill="#dcbb6f"/><rect x="387" y="435" width="40" height="5" fill="#d8b464"/><rect x="427" y="435" width="5" height="5" fill="#dcbb6f"/><rect x="432" y="435" width="5" height="5" fill="#e0c27a"/><rect x="437" y="435" width="5" height="5" fill="#e8d090"/><rect x="442" y="435" width="5" height="5" fill="#ecd69f"/><rect x="447" y="435" width="5" height="5" fill="#f2e4bd"/><rect x="452" y="435" width="5" height="5" fill="#f6eacc"/><rect x="457" y="435" width="10" height="5" fill="#f7edd3"/><rect x="467" y="435" width="40" height="5" fill="#f8f0da"/><rect x="507" y="435" width="10" height="5" fill="#f7edd3"/><rect x="517" y="435" width="5" height="5" fill="#f6eacc"/><rect x="522" y="435" width="5" height="5" fill="#efddae"/><rect x="527" y="435" width="5" height="5" fill="#ecd69f"/><rect x="532" y="435" width="35" height="5" fill="#e8d090"/></g>
    <ellipse cx="322" cy="193" rx="9" ry="4.5" transform="rotate(10 322 193)" fill="#c89040" opacity="0.8" filter="url(#f2_5)"/><ellipse cx="443" cy="322" rx="8" ry="6" transform="rotate(0 443 322)" fill="#e8d098" opacity="0.85" filter="url(#f2_5)"/><ellipse cx="431" cy="301" rx="5" ry="4" transform="rotate(0 431 301)" fill="#c89848" opacity="0.6" filter="url(#f2)"/><ellipse cx="475" cy="227" rx="32" ry="3.5" transform="rotate(3 475 227)" fill="#c09850" opacity="0.65" filter="url(#f2_5)"/><ellipse cx="320" cy="234" rx="15" ry="5" transform="rotate(10 320 234)" fill="#c89840" opacity="0.55" filter="url(#f2_5)"/><ellipse cx="378" cy="264" rx="34" ry="3.5" transform="rotate(0 378 264)" fill="#c89840" opacity="0.55" filter="url(#f2_5)"/><ellipse cx="510" cy="285" rx="14" ry="5" transform="rotate(0 510 285)" fill="#b88030" opacity="0.5" filter="url(#f2_5)"/><ellipse cx="512" cy="247" rx="9" ry="4" transform="rotate(40 512 247)" fill="#c09040" opacity="0.55" filter="url(#f2_5)"/><ellipse cx="318" cy="300" rx="9" ry="4" transform="rotate(20 318 300)" fill="#c89840" opacity="0.5" filter="url(#f2)"/><ellipse cx="322" cy="330" rx="11" ry="3.5" transform="rotate(25 322 330)" fill="#c89840" opacity="0.5" filter="url(#f2)"/><ellipse cx="339" cy="341" rx="5" ry="8" transform="rotate(30 339 341)" fill="#b88a48" opacity="0.5" filter="url(#f3)"/><ellipse cx="354" cy="395" rx="10" ry="4" transform="rotate(15 354 395)" fill="#e8d0a0" opacity="0.6" filter="url(#f3)"/><ellipse cx="497" cy="388" rx="18" ry="7" transform="rotate(-20 497 388)" fill="#faf0dc" opacity="0.7" filter="url(#f4)"/><ellipse cx="495" cy="390" rx="22" ry="6" transform="rotate(-5 495 390)" fill="#f8f0e0" opacity="0.8" filter="url(#f3)"/><ellipse cx="494" cy="364" rx="22" ry="3.5" transform="rotate(-38 494 364)" fill="#c89848" opacity="0.6" filter="url(#f2_5)"/><ellipse cx="426" cy="201" rx="10" ry="6.5" transform="rotate(-25 426 201)" fill="#5a2800" opacity="0.55" filter="url(#f1_5)"/><ellipse cx="397" cy="206" rx="8" ry="7" transform="rotate(0 397 206)" fill="#5a2800" opacity="0.45" filter="url(#f1_5)"/><ellipse cx="350" cy="391" rx="24" ry="4" transform="rotate(28 350 391)" fill="#ecd8a8" opacity="0.8" filter="url(#f2_5)"/><ellipse cx="322" cy="380" rx="16" ry="4" transform="rotate(22 322 380)" fill="#c89850" opacity="0.6" filter="url(#f2_5)"/><ellipse cx="356" cy="397" rx="10" ry="4" transform="rotate(20 356 397)" fill="#f0e0b8" opacity="0.8" filter="url(#f2_5)"/><ellipse cx="330" cy="338" rx="16" ry="3" transform="rotate(30 330 338)" fill="#c49040" opacity="0.5" filter="url(#f2_5)"/><ellipse cx="384" cy="291" rx="31" ry="19" transform="rotate(-5 384 291)" fill="none" stroke="#4a2000" stroke-width="1.2" opacity="0.25" filter="url(#fr)"/><ellipse cx="384" cy="291" rx="23" ry="13" transform="rotate(-5 384 291)" fill="none" stroke="#4a2000" stroke-width="1.2" opacity="0.25" filter="url(#fr)"/><ellipse cx="387" cy="292" rx="14" ry="8" transform="rotate(-5 387 292)" fill="none" stroke="#4a2000" stroke-width="1.2" opacity="0.25" filter="url(#fr)"/><ellipse cx="426" cy="201" rx="10" ry="7" transform="rotate(-25 426 201)" fill="none" stroke="#4a2000" stroke-width="1.2" opacity="0.25" filter="url(#fr)"/><ellipse cx="394" cy="206" rx="8" ry="6" transform="rotate(0 394 206)" fill="none" stroke="#4a2000" stroke-width="1.2" opacity="0.25" filter="url(#fr)"/><ellipse cx="411" cy="376" rx="36" ry="18" transform="rotate(-10 411 376)" fill="none" stroke="#4a2000" stroke-width="1.2" opacity="0.25" filter="url(#fr)"/><ellipse cx="313" cy="271" rx="6" ry="10" transform="rotate(0 313 271)" fill="none" stroke="#4a2000" stroke-width="1.2" opacity="0.25" filter="url(#fr)"/><path d="M366.4,339.1 L369.4,340.3 L368.4,344.8 L371.3,347.4 L376.7,349.6 L382.3,347.8 Q387.0,345.3 392.6,347.2 Q397.3,350.0 399.8,355.6 L403.1,358.3 L397.3,359.8 Q392.6,362.8 387.0,360.9 Q382.3,359.4 378.6,357.1 L372.0,354.9 Q365.4,353.4 362.3,351.9 Q360.4,349.1 362.6,344.4 Z" fill="#050200" filter="url(#fh)"/>
  </g>
</svg>

<!-- right panel -->
<div class="a" style="left:815px;top:3px;width:209px;height:1px;background:#c5c2b2"></div>
<div class="a" style="left:815px;top:1px;width:209px;height:2px;background:#f6f4ea"></div>
<div class="a" style="left:815px;top:5px;width:205px;height:1px;background:#f8f6ee"></div>
<div class="a" style="left:1022px;top:0;width:1px;height:640px;background:#c5c2b2"></div>
<div class="a" style="left:1021px;top:5px;width:1px;height:635px;background:#f8f6ee"></div>
<div class="a" style="left:1020px;top:5px;width:1px;height:635px;background:#f8f6ee"></div>

<div class="grp" style="left:816px;top:60px;width:202px;height:522px;"></div>
<div class="a" style="left:820px;top:55px;width:66px;height:10px;background:#ECE9D8"></div>
<div class="t" style="left:822px;top:56px">3DParameter</div>

<div class="cb" style="left:822px;top:76px"></div>
<div class="t" style="left:835px;top:76px">Invert</div>
<div class="cb" style="left:822px;top:93px"><svg class="ck" width="9" height="9"><path d="M1.5,4 L3.5,6 L7,2.2" fill="none" stroke="#000" stroke-width="1.6"/></svg></div>
<div class="t" style="left:835px;top:93px">Denoise</div>

<div class="s" style="left:884px;top:73px">Zone</div>
<div class="s" style="left:884px;top:84px">X1:</div>
<div class="s" style="left:884px;top:95px">Y1:</div>
<div class="s" style="left:884px;top:106px">Z1:</div>
<div class="s num" style="left:912px;top:84px">99</div>
<div class="s num" style="left:912px;top:95px">92</div>
<div class="s num" style="left:912px;top:106px">803</div>
<div class="s" style="left:952px;top:84px">X2:</div>
<div class="s" style="left:952px;top:95px">Y2:</div>
<div class="s" style="left:952px;top:106px">Z2:</div>
<div class="s num" style="left:981px;top:84px">176</div>
<div class="s num" style="left:981px;top:95px">168</div>
<div class="s num" style="left:981px;top:106px">941</div>

<div class="s" style="left:821px;top:141px">X:</div>
<div class="edit" style="left:845px;top:140px;width:28px;height:15px"></div>
<div class="s" style="left:847px;top:144px">1.0</div>
<div class="s" style="left:878px;top:141px">Y:</div>
<div class="edit" style="left:902px;top:140px;width:28px;height:15px"></div>
<div class="s" style="left:904px;top:144px">1.0</div>
<div class="s" style="left:934px;top:141px">Z:</div>
<div class="edit" style="left:959px;top:140px;width:28px;height:15px"></div>
<div class="s" style="left:961px;top:144px">1.0</div>
<div class="s" style="left:987px;top:140px">(mm/p)</div>

<div class="t" style="left:821px;top:164px">ZRate</div>
<div class="a" style="left:878px;top:162px;width:104px;height:13px;box-sizing:border-box;background:#f4f3ec;border-top:1px solid #b8b5a6;border-left:1px solid #b8b5a6"></div>
<div class="btn" style="left:879px;top:163px;width:12px;height:12px"></div>
<svg class="a" style="left:879px;top:163px" width="12" height="12"><path d="M3.5,6 L6.5,2.5 L6.5,9.5 Z" fill="#000"/></svg>
<div class="btn" style="left:970px;top:163px;width:12px;height:12px"></div>
<svg class="a" style="left:970px;top:163px" width="12" height="12"><path d="M8,6 L5,2.5 L5,9.5 Z" fill="#000"/></svg>
<div class="btn" style="left:925px;top:163px;width:12px;height:12px;background:#f1efe6"></div>
<div class="t" style="left:992px;top:164px">1</div>

<div class="a" style="left:822px;top:185px;width:194px;height:1px;background:#ACA899"></div>
<div class="a" style="left:822px;top:186px;width:194px;height:1px;background:#fff"></div>

<div class="t" style="left:821px;top:198px">Hi Echo:</div>
<div class="t" style="left:992px;top:198px">198</div>
<div class="a" style="left:822px;top:211px;width:181px;height:6px;box-sizing:border-box;background:#fff;border-top:1px solid #8a887c;border-left:1px solid #8a887c"></div>
<div class="a" style="left:963px;top:208px;width:7px;height:12px;box-sizing:border-box;background:#d8d6cc;border:1px solid #6f6d64"></div>

<div class="t" style="left:821px;top:227px">Low Echo:</div>
<div class="t" style="left:992px;top:227px">46</div>
<div class="a" style="left:822px;top:240px;width:181px;height:6px;box-sizing:border-box;background:#c2c0b6;border-top:1px solid #8a887c;border-left:1px solid #8a887c"></div>
<div class="a" style="left:855px;top:237px;width:7px;height:12px;box-sizing:border-box;background:#8c8a84;border:1px solid #4a4942"></div>

<div class="cb" style="left:822px;top:264px"></div>
<div class="t" style="left:835px;top:263px">Shade</div>
<div class="cb" style="left:947px;top:264px"><svg class="ck" width="9" height="9"><path d="M1.5,4 L3.5,6 L7,2.2" fill="none" stroke="#000" stroke-width="1.6"/></svg></div>
<div class="t" style="left:960px;top:263px">Black</div>

<div class="a" style="left:823px;top:560px;width:8px;height:8px;border-radius:50%;background:#fff;box-shadow:inset 1px 1px 0 #777"></div>
<div class="t" style="left:835px;top:559px">2D</div>
<div class="a" style="left:863px;top:560px;width:8px;height:8px;border-radius:50%;background:#fff;box-shadow:inset 1px 1px 0 #777"></div>
<div class="a" style="left:865.5px;top:562.5px;width:3px;height:3px;border-radius:50%;background:#000"></div>
<div class="t" style="left:875px;top:559px">3D</div>

<div class="btn" style="left:901px;top:544px;width:64px;height:35px"></div>
<div class="t" style="left:908px;top:556px;font-size:13px;letter-spacing:-0.75px;color:#bdb9ac;-webkit-text-stroke:0.25px #bdb9ac;text-shadow:1px 1px 0 #fff">3DStart</div>
<div class="btn" style="left:970px;top:544px;width:46px;height:35px"></div>
<div class="t" style="left:986px;top:556px;font-size:13px;letter-spacing:-1.2px">OK</div>

<!-- bottom panel -->
<div class="a" style="left:1px;top:566px;width:813px;height:1px;background:#f6f4ea"></div>
<div class="a" style="left:0;top:638px;width:1022px;height:1px;background:#c5c2b2"></div>
<div class="grp" style="left:3px;top:575px;width:808px;height:59px;"></div>
<div class="a" style="left:7px;top:570px;width:66px;height:10px;background:#ECE9D8"></div>
<div class="t" style="left:8px;top:571px">3DVisualize</div>

<div class="btn" style="left:15px;top:585px;width:97px;height:23px"></div>
<div class="t" style="left:31px;top:592px">StartRotate</div>
<div class="btn" style="left:15px;top:613px;width:17px;height:18px"></div>
<div class="t" style="left:20px;top:616px">+</div>
<div class="t" style="left:39px;top:614px">Speed</div>
<div class="btn" style="left:94px;top:613px;width:18px;height:18px"></div>
<div class="t" style="left:100px;top:617px">-</div>

<div class="cb" style="left:133px;top:589px"><svg class="ck" width="9" height="9"><path d="M1.5,4 L3.5,6 L7,2.2" fill="none" stroke="#000" stroke-width="1.6"/></svg></div>
<div class="t" style="left:146px;top:588px">PColor</div>
<div class="edit" style="left:191px;top:585px;width:50px;height:15px;border-width:1px 0 0 1px"></div>
<div class="t" style="left:192px;top:588px">PColor</div>
<div class="a" style="left:191px;top:585px;width:50px;height:15px;box-sizing:border-box;border:1px solid #7f7d70"></div>
<div class="a" style="left:229px;top:586px;width:11px;height:13px;box-sizing:border-box;border-right:1px solid #8a887c;border-bottom:1px solid #8a887c;background:linear-gradient(90deg,#fff,#f0eee4)"></div>
<svg class="a" style="left:229px;top:586px" width="11" height="13"><path d="M3,5.5 L8,5.5 L5.5,8.5 Z" fill="#000"/></svg>

<div class="btn" style="left:321px;top:584px;width:92px;height:24px"></div>
<div class="t" style="left:341px;top:592px">3DCapture</div>
<div class="btn" style="left:424px;top:584px;width:69px;height:24px"></div>
<div class="t" style="left:435px;top:592px">Record3D</div>
<div class="btn" style="left:424px;top:610px;width:69px;height:24px"></div>
<div class="t" style="left:437px;top:617px">Preview</div>
</body></html>
